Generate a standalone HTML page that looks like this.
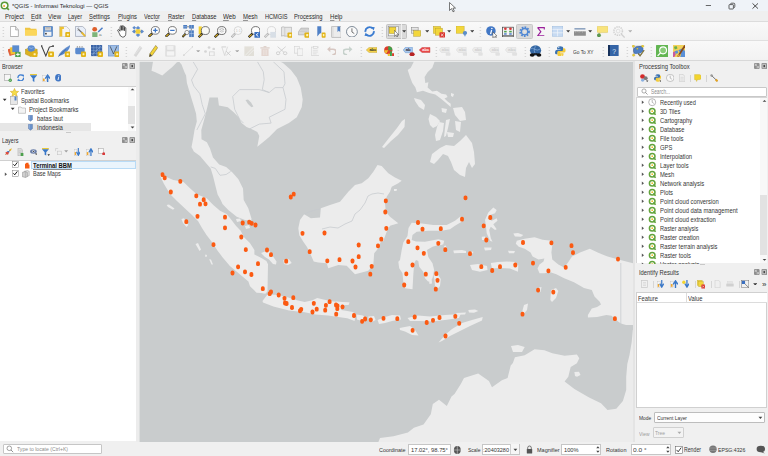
<!DOCTYPE html><html><head><meta charset="utf-8"><style>
html,body{margin:0;padding:0;}
body{width:768px;height:456px;overflow:hidden;position:relative;background:#f0f0f0;font-family:"Liberation Sans",sans-serif;}
.t{position:absolute;white-space:nowrap;line-height:1;}
.r{position:absolute;}
svg{position:absolute;}
</style></head><body>
<div class="r" style="left:0px;top:0px;width:768.00px;height:11.00px;background:#eff3f8;"></div>
<div class="r" style="left:0px;top:11px;width:768.00px;height:10.00px;background:#efefef;"></div>
<div class="r" style="left:0px;top:21px;width:768.00px;height:1.00px;background:#dcdcdc;"></div>
<div class="r" style="left:0px;top:22px;width:768.00px;height:18.00px;background:linear-gradient(#f9f9f9,#f2f2f2);"></div>
<div class="r" style="left:0px;top:40px;width:768.00px;height:1.00px;background:#e0e0e0;"></div>
<div class="r" style="left:0px;top:41px;width:768.00px;height:19.00px;background:linear-gradient(#f9f9f9,#f2f2f2);"></div>
<div class="r" style="left:0px;top:60px;width:768.00px;height:1.00px;background:#d8d8d8;"></div>
<svg style="left:0;top:1" width="10" height="10" viewBox="0 0 10 10"><circle cx="4.6" cy="4.5" r="3.3" fill="#fdfdf8" stroke="#5a9a38" stroke-width="1.5"/><path d="M6.3 6.3 L8.9 8.8" stroke="#5a9a38" stroke-width="1.7"/><circle cx="4.1" cy="4.9" r="1" fill="#f0a030"/></svg>
<div class="t" style="left:11.7px;top:3.04px;font-size:6.1px;color:#2a2a2a;font-weight:400;transform:scaleX(0.962);transform-origin:0 0;">*QGIS - Informasi Teknologi — QGIS</div>
<svg style="left:705;top:4" width="7" height="3"><path d="M0.8 1.5 H6" stroke="#444" stroke-width="0.8"/></svg>
<svg style="left:727;top:2" width="10" height="8"><rect x="2" y="2.6" width="4.4" height="4.4" rx="0.6" fill="none" stroke="#3a3a3a" stroke-width="0.8"/><path d="M3.4 2.2 Q3.6 1.2 4.6 1.2 H6.8 Q7.8 1.2 7.8 2.2 V4.6 Q7.8 5.6 6.8 5.8" fill="none" stroke="#3a3a3a" stroke-width="0.8"/></svg>
<svg style="left:751;top:2" width="9" height="8"><path d="M1.5 1.4 L7 6.6 M7 1.4 L1.5 6.6" stroke="#3a3a3a" stroke-width="0.9"/></svg>
<svg style="left:449;top:2" width="8" height="11"><path d="M0.5 0.5 L0.5 8.5 L2.5 6.6 L4 9.8 L5.3 9.2 L3.9 6.1 L6.5 6.1 Z" fill="#fff" stroke="#222" stroke-width="0.6"/></svg>
<div class="t" style="left:5.2px;top:14.22px;font-size:6.3px;color:#2a2a2a;font-weight:400;transform:scaleX(0.968);transform-origin:0 0;">Pro<u style="text-decoration-thickness:0.5px;text-underline-offset:0.8px;text-decoration-color:rgba(40,40,40,0.45)">j</u>ect</div>
<div class="t" style="left:30.5px;top:14.22px;font-size:6.3px;color:#2a2a2a;font-weight:400;transform:scaleX(0.967);transform-origin:0 0;"><u style="text-decoration-thickness:0.5px;text-underline-offset:0.8px;text-decoration-color:rgba(40,40,40,0.45)">E</u>dit</div>
<div class="t" style="left:48px;top:14.22px;font-size:6.3px;color:#2a2a2a;font-weight:400;transform:scaleX(0.960);transform-origin:0 0;"><u style="text-decoration-thickness:0.5px;text-underline-offset:0.8px;text-decoration-color:rgba(40,40,40,0.45)">V</u>iew</div>
<div class="t" style="left:68px;top:14.22px;font-size:6.3px;color:#2a2a2a;font-weight:400;transform:scaleX(0.888);transform-origin:0 0;"><u style="text-decoration-thickness:0.5px;text-underline-offset:0.8px;text-decoration-color:rgba(40,40,40,0.45)">L</u>ayer</div>
<div class="t" style="left:89px;top:14.22px;font-size:6.3px;color:#2a2a2a;font-weight:400;transform:scaleX(0.922);transform-origin:0 0;"><u style="text-decoration-thickness:0.5px;text-underline-offset:0.8px;text-decoration-color:rgba(40,40,40,0.45)">S</u>ettings</div>
<div class="t" style="left:118px;top:14.22px;font-size:6.3px;color:#2a2a2a;font-weight:400;transform:scaleX(0.920);transform-origin:0 0;"><u style="text-decoration-thickness:0.5px;text-underline-offset:0.8px;text-decoration-color:rgba(40,40,40,0.45)">P</u>lugins</div>
<div class="t" style="left:144px;top:14.22px;font-size:6.3px;color:#2a2a2a;font-weight:400;transform:scaleX(0.894);transform-origin:0 0;">Vect<u style="text-decoration-thickness:0.5px;text-underline-offset:0.8px;text-decoration-color:rgba(40,40,40,0.45)">o</u>r</div>
<div class="t" style="left:168px;top:14.22px;font-size:6.3px;color:#2a2a2a;font-weight:400;transform:scaleX(0.889);transform-origin:0 0;"><u style="text-decoration-thickness:0.5px;text-underline-offset:0.8px;text-decoration-color:rgba(40,40,40,0.45)">R</u>aster</div>
<div class="t" style="left:191.75px;top:14.22px;font-size:6.3px;color:#2a2a2a;font-weight:400;transform:scaleX(0.908);transform-origin:0 0;"><u style="text-decoration-thickness:0.5px;text-underline-offset:0.8px;text-decoration-color:rgba(40,40,40,0.45)">D</u>atabase</div>
<div class="t" style="left:223px;top:14.22px;font-size:6.3px;color:#2a2a2a;font-weight:400;transform:scaleX(0.991);transform-origin:0 0;"><u style="text-decoration-thickness:0.5px;text-underline-offset:0.8px;text-decoration-color:rgba(40,40,40,0.45)">W</u>eb</div>
<div class="t" style="left:243px;top:14.22px;font-size:6.3px;color:#2a2a2a;font-weight:400;transform:scaleX(0.941);transform-origin:0 0;"><u style="text-decoration-thickness:0.5px;text-underline-offset:0.8px;text-decoration-color:rgba(40,40,40,0.45)">M</u>esh</div>
<div class="t" style="left:264.5px;top:14.22px;font-size:6.3px;color:#2a2a2a;font-weight:400;transform:scaleX(0.893);transform-origin:0 0;">HCMGIS</div>
<div class="t" style="left:294px;top:14.22px;font-size:6.3px;color:#2a2a2a;font-weight:400;transform:scaleX(0.914);transform-origin:0 0;">Pro<u style="text-decoration-thickness:0.5px;text-underline-offset:0.8px;text-decoration-color:rgba(40,40,40,0.45)">c</u>essing</div>
<div class="t" style="left:329.5px;top:14.22px;font-size:6.3px;color:#2a2a2a;font-weight:400;transform:scaleX(0.964);transform-origin:0 0;"><u style="text-decoration-thickness:0.5px;text-underline-offset:0.8px;text-decoration-color:rgba(40,40,40,0.45)">H</u>elp</div>
<div class="r" style="left:139px;top:61px;width:494px;height:381px;overflow:hidden;background:#c9cccd">
<svg style="left:0;top:0" width="494" height="381" viewBox="139 61 494 381">
<polygon points="153,60 153,61.5 151.5,70.8 155.4,72.3 162.3,75.4 166.9,71.5 172.3,66.9 176.9,62.3 179.2,61.8 181.5,64.6 184.5,72.3 186.1,75.4 186.9,83 189.2,90.7 191.5,98.4 193.8,106.1 196.1,113.8 196.8,121.4 194.5,130 193,139.2 191.5,146.9 193.8,151.5 200,156.1 205.3,162.3 210.7,168.4 213,176 215.3,185.3 217.6,194.5 220.7,200 222.5,204 228.3,210 236.7,216.7 245,220 250,220.8 251.7,219.2 248.3,208.3 243.7,200 243,188.4 238.4,179.2 232.2,172.2 226.1,166.9 219.2,164.6 213,157.6 210,148.4 206.9,142.3 201.5,139.2 201.3,130 204.5,118.4 207.6,106.1 209.5,97.5 217.9,97.5 218.9,105.4 227.8,107.3 233.7,112.3 238.6,117.2 241.6,123.1 246.5,127.1 251.4,129 257.3,132 259.3,135.9 257.3,146.8 262.3,142.8 269.2,136.9 277.1,129 288.9,123.1 296.8,117.2 301.7,107.3 302.7,99.4 300.7,87.6 296.8,77.8 290.9,69.9 283,63 280,61.5 280,60" fill="#ececec"/>
<polygon points="160,174.2 173.3,180 183.3,181.7 190,188.3 196.7,194.2 206.7,198.3 213.3,205 220,210.8 226.7,214 231.5,220 236.1,226.1 240.7,230.8 243.8,236.9 249.9,243 254.4,250 254.4,254.4 261,257.7 266.4,261 268,264.2 267.7,280 267.5,291.6 265.3,293.8 261,293 256.6,292.7 250,286.2 248.4,281.4 239.2,273.8 229.9,266.1 222.3,256.9 217.6,250.7 211.5,241.5 206.5,235 202,228 198,221 192,215 185,208.5 177.5,201.5 170,194 164,184 160,175.8" fill="#ececec"/>
<polygon points="300,220 304.2,214.2 310.8,218.3 320,217.5 320.8,208.3 330,205 340,201.7 348.3,191.7 355,185 361.7,183.3 368.3,178.3 373.3,171.7 377.5,165 381.7,166 388.3,173.3 395,177.5 401.7,180.8 398.3,183.3 391.7,186.7 390,191.7 386.7,196.7 385,203.3 385.8,211.7 390,216.7 398.3,223.3 390,225.8 386.7,231.7 383.3,241 380.8,241.7 378.3,248.3 374.2,253.3 373.3,265 368.3,270.8 355,274.2 346.7,265.8 338.3,265 328.3,268.3 326.7,263.3 318.3,262.5 313.7,261.4 310.3,253.8 307,247 303.5,242 299.3,235.2 298.3,228.3" fill="#ececec"/>
<polygon points="262.5,301 267.2,294.8 276.6,294.8 287.5,297.2 296.9,300.3 304.7,301.9 312.5,300.3 317.2,298 323.4,299.5 331.25,301.3 338.2,301.9 349.2,302.8 348.3,304.6 342.8,305.5 341,310 347.3,311 352.8,311.9 355.6,313.7 355.1,317.3 354.6,321 347.3,318.3 338.2,317 328,315.5 315.6,314.4 304.7,312.3 289,310.5 273.4,306.6 263,302.5" fill="#ececec"/>
<polygon points="408.5,228 411.7,222.7 422,223.5 433.3,225 446.7,225 455,220.8 460,216.7 463.3,217.5 461.7,221.7 455,225.8 450,229.2 441.7,230.8 428.3,230.8 416.7,231.7 412.5,235 411.7,240 416,241.5 425,241.7 438.3,239.2 444.2,240.8 443.3,244.2 438.3,245 432.5,246.7 427,250 428.3,257 432.5,263.3 434.2,270 432.5,278.3 428.3,281.7 425,278.3 423.3,271.7 419.2,266.7 418.3,261 416,260 414.2,263.3 413.3,275 412.5,289.2 405,288.3 403.3,281.7 402.5,273.3 399.2,268.3 398.3,261.7 400,260 401.7,250 403.3,242.5 407.5,236" fill="#ececec"/>
<polygon points="516.8,240.8 524.7,238.8 534.6,237.2 542.5,239.8 551.4,240.8 552.3,244.7 551.4,252.6 552.3,259.5 558.3,264.4 564.2,267.4 568,262.5 572,256.6 580,252.6 589.8,248.7 597.7,252.6 607.6,256.6 618.4,259.5 634,263.5 634,324.9 626,324.9 620.8,323.6 615.5,319.6 611.6,315.7 606.3,315 597.1,317 587.9,317.6 587.9,315 591.8,308.4 597.1,307.1 601,304.5 599.7,301.8 594.5,296.6 591.8,290 584,288 574,282.2 564.2,278.3 556.3,274.3 550.4,272.3 544.4,273.3 539.5,273.3 537.5,268.4 539.5,264.4 543.5,261.5 544.4,258.5 538.5,259.5 532.6,256.6 530.6,252.6 524.7,248.7 518.8,246.7 515.8,243.7" fill="#ececec"/>
<polygon points="378,443 380,437.9 393.5,436.2 407.9,432.4 413.9,427.7 423.5,424.6 430.8,414.2 432.8,404 439,399.7 444.3,404 446.8,406 451.5,396.6 454.5,393.9 460.8,384.1 464,377.9 478.2,373.5 488.9,381 492,387.2 501.9,380.3 507.6,377.9 510.7,365.4 512.9,363.1 514.9,357.2 524.7,355.2 534.6,349.3 544.4,350.3 552.3,353.3 564.6,355.8 576.9,354.6 579.3,358.3 576.9,363.2 570.7,366.9 569.5,371.8 568.3,376.7 564.6,381.6 574.4,389 589.1,397.6 601,403.3 607.5,410 616.3,408.8 622.9,401 626.2,390 626.2,377 627.3,363.9 629.5,355 631.7,342 632.8,330 634,330 634,443" fill="#ececec"/>
<polygon points="414.6,60 434.6,60 434.6,61.5 432.3,67.7 427.6,72.3 424.6,76.9 425.3,83 428.4,82.3 427.6,87.6 432.3,91.5 436.9,90.7 441.5,93.8 446.1,94.6 447.6,96.9 444.5,98.4 447.6,101.5 450.7,103.8 450.7,106.9 446.1,103 440.7,98.4 435.3,94.6 429.2,93 423,90.7 416.9,92.3 415.4,87.6 412.3,83 410,76.9 407.7,70 410.8,67.7" fill="#ececec"/>
<polygon points="414,98 421,100 425,105 424,110 419,107 415,101" fill="#ececec"/>
<polygon points="405,119 404.5,127 398,135 391,141 384,148 382,147 389,138 397,128 402,121" fill="#ececec"/>
<polygon points="430,114 436,117 440,121 437,126 433,128 430,125 428.5,119" fill="#ececec"/>
<polygon points="439,122 444,123 443,131 440,140 436,141 435,135 437,127" fill="#ececec"/>
<polygon points="446,120 450,119 448,128 446,136 444,137 445,128" fill="#ececec"/>
<polygon points="447,132 454,133 453,137 448,137" fill="#ececec"/>
<polygon points="453,108 462,107 465,112 466,120 460,121 455,115" fill="#ececec"/>
<polygon points="455,121 461,122 460,132 456,130" fill="#ececec"/>
<polygon points="441.5,108 447,109 446,113 442,112" fill="#ececec"/>
<polygon points="430,162 432,154 440,148 446,145 454,146 460,141 466,135 472,143 474,152 475,164 472,168 469,162 466,168 465,177 460,175 454,170 451,162 448,156 443,154 438,160 434,164" fill="#ececec"/>
<polygon points="451,93 454,94 453,97 451,96" fill="#ececec"/>
<polygon points="493.3,207.5 496.7,210 495,213.3 490,215 487.5,218.3 491.7,220.8 496.7,218.3 497.5,220.8 493.3,224.2 496.7,229.2 495,230 490.8,226.7 489.2,230 490.8,238.3 492.5,241.7 490,240.8 486.7,233.3 485.8,225 485,220 488.3,212.5" fill="#ececec"/>
<polygon points="481.7,236.7 485,236.5 485.8,240 482,240" fill="#ececec"/>
<polygon points="484,247.5 491.7,247.5 491,250 485,250.5" fill="#ececec"/>
<polygon points="508,250.8 515,251 514,253.3 509,253.3" fill="#ececec"/>
<polygon points="513.3,233.5 518,233 523.3,235 521,236.7 515,236.5" fill="#ececec"/>
<polygon points="470,265 478,264 487,266 487.5,270 480,271.7 472,270" fill="#ececec"/>
<polygon points="490.8,263 498,262 507,261.5 515,262 518.3,265 518,271.7 510,268.5 500,268 492,268.5" fill="#ececec"/>
<polygon points="453.3,250.5 462,250 466,251 466,253 460,253 454,253.3" fill="#ececec"/>
<polygon points="468,252 473.3,251.5 473,253.3 468,253.5" fill="#ececec"/>
<polygon points="356.5,314.5 363,315.5 365.6,318 362,321 357,319.5" fill="#ececec"/>
<polygon points="368.3,316.5 374,316 375.6,320 372,322 369,321" fill="#ececec"/>
<polygon points="377.6,320 385,317 392,315 400,315.5 401,319.5 392,321 385,323 379,324" fill="#ececec"/>
<polygon points="407.5,318 418,315.5 430,316.5 445,315 460.6,314 459,318 445,320 432,321.6 420,321 410,321" fill="#ececec"/>
<polygon points="399.7,328 410,326 415,330 418.5,335.5 412,335 405,331.5 400,330" fill="#ececec"/>
<polygon points="438.5,342.6 446,334 452,329 462,323 472,320 482.7,317 482,320.5 470,326 460,331 450,336 442,341" fill="#ececec"/>
<polygon points="468.3,310 475,309.4 478.3,311 474,312.7 469,312.5" fill="#ececec"/>
<polygon points="456,313 466,312.5 465,314.5 457,314.8" fill="#ececec"/>
<polygon points="551,290 556,288 558.3,291 556,298 552,302 550.4,300" fill="#ececec"/>
<polygon points="537.5,288 541.5,287 540.5,292 538,291.5" fill="#ececec"/>
<polygon points="524,305 528,303.5 527,310 523,315 521.8,313" fill="#ececec"/>
<polygon points="511,346 518,345 524.7,347 522,352 513,352" fill="#ececec"/>
<polygon points="574.4,372 579,371.8 580.5,375 577,376.7 575,376" fill="#ececec"/>
<polygon points="261,253 265,251.5 269.5,251 272,255 276.5,261.5 276,264.5 273,264 269,259.5 265,257" fill="#ececec"/>
<polygon points="283.3,260 289,259.2 291.7,263 288,265 284,264" fill="#ececec"/>
<polygon points="336,301.5 349.6,302.5 348.5,305 337,305" fill="#ececec"/>
<polygon points="166.6,205 169,204.4 174.5,208.5 173,209.8 168,207" fill="#ececec"/>
<polygon points="181.4,219 184,218.2 188.4,225 186.5,227 183,223" fill="#ececec"/>
<polygon points="195.5,244 198,243 201,249.5 199.5,251" fill="#ececec"/>
<polygon points="205.4,254.6 207,255 206.5,257 205,256.5" fill="#ececec"/>
<polygon points="209.2,259.2 211,259.5 213,264.5 211.5,264.5" fill="#ececec"/>
<polygon points="291,195 294,193 295.5,195 292,198" fill="#ececec"/>
<polygon points="236,219 240,218.5 241,221 237,222" fill="#ececec"/>
<polygon points="245,226 249,225 250,228 246,229" fill="#ececec"/>
<polygon points="394,189 397,189 396.5,191 394,191" fill="#ececec"/>
<polygon points="245.5,100 248,99.4 251,102.5 253.4,106.5 251.5,107.3 248,104" fill="#c9cccd"/>
<polygon points="433.5,274.5 437,273.5 440.8,279 440,286 438,288.5 435,286 434.5,280" fill="#ececec"/>
<polygon points="428.5,277.5 431.5,276.5 432,283.5 429.5,284" fill="#ececec"/>
<polygon points="437.5,242.5 441.5,242 442.5,244.5 439,245.5" fill="#ececec"/>
<polygon points="444,246 446,245.5 446.5,248.5 444.5,249" fill="#ececec"/>
<polyline points="193,61.5 197.6,69.2 191.5,80 193.8,86.1 199.9,93.8 202.2,104.5 205.3,113.8 201.4,121.4 196.8,130" fill="none" stroke="#c6cacd" stroke-width="0.75"/>
<polyline points="257.3,61.5 263.3,71.8 264.2,79.7 262.3,89.6 269.2,92.5 275.1,87.6 283,87.6" fill="none" stroke="#c6cacd" stroke-width="0.75"/>
<polyline points="232.7,96.5 239.6,89.6 259.3,89.6 269.2,92.5" fill="none" stroke="#c6cacd" stroke-width="0.75"/>
<polyline points="283,87.6 286,99.4 285,109.3 269.2,117.2 271.1,123.1 259.3,124.1 249.4,129" fill="none" stroke="#c6cacd" stroke-width="0.75"/>
<polyline points="273.1,61.5 284,71.8 285,83.7 283,87.6" fill="none" stroke="#c6cacd" stroke-width="0.75"/>
<polyline points="232.7,96.5 234.7,109.3 239.6,119.2 243.5,123.1" fill="none" stroke="#c6cacd" stroke-width="0.75"/>
<polyline points="210.7,166.9 215.3,168.4 220,175.3 226.1,174.5 230.7,171.5" fill="none" stroke="#c6cacd" stroke-width="0.75"/>
<polyline points="304,214 309,212 315,210 320,209" fill="none" stroke="#c6cacd" stroke-width="0.75"/>
<polyline points="322,229 330,227 338,228 345,224 352,221 355,214 360,210 365,203 368,196 372,194 378,193 384,194" fill="none" stroke="#c6cacd" stroke-width="0.75"/>
<polyline points="620.8,263 620.8,324" fill="none" stroke="#c6cacd" stroke-width="0.75"/>
<rect x="160.60" y="172.30" width="3.8" height="4.8" rx="1.7" fill="#fb5a12"/>
<rect x="162.80" y="175.40" width="3.8" height="4.8" rx="1.7" fill="#fb5a12"/>
<rect x="178.40" y="178.90" width="3.8" height="4.8" rx="1.7" fill="#fb5a12"/>
<rect x="168.90" y="189.60" width="3.8" height="4.8" rx="1.7" fill="#fb5a12"/>
<rect x="194.40" y="193.40" width="3.8" height="4.8" rx="1.7" fill="#fb5a12"/>
<rect x="201.80" y="197.30" width="3.8" height="4.8" rx="1.7" fill="#fb5a12"/>
<rect x="198.10" y="201.80" width="3.8" height="4.8" rx="1.7" fill="#fb5a12"/>
<rect x="203.60" y="201.40" width="3.8" height="4.8" rx="1.7" fill="#fb5a12"/>
<rect x="195.60" y="213.90" width="3.8" height="4.8" rx="1.7" fill="#fb5a12"/>
<rect x="184.40" y="219.30" width="3.8" height="4.8" rx="1.7" fill="#fb5a12"/>
<rect x="223.10" y="214.80" width="3.8" height="4.8" rx="1.7" fill="#fb5a12"/>
<rect x="223.10" y="225.40" width="3.8" height="4.8" rx="1.7" fill="#fb5a12"/>
<rect x="240.80" y="220.60" width="3.8" height="4.8" rx="1.7" fill="#fb5a12"/>
<rect x="247.30" y="219.80" width="3.8" height="4.8" rx="1.7" fill="#fb5a12"/>
<rect x="249.80" y="220.90" width="3.8" height="4.8" rx="1.7" fill="#fb5a12"/>
<rect x="253.60" y="222.60" width="3.8" height="4.8" rx="1.7" fill="#fb5a12"/>
<rect x="239.40" y="234.60" width="3.8" height="4.8" rx="1.7" fill="#fb5a12"/>
<rect x="291.80" y="191.80" width="3.8" height="4.8" rx="1.7" fill="#fb5a12"/>
<rect x="288.90" y="194.60" width="3.8" height="4.8" rx="1.7" fill="#fb5a12"/>
<rect x="383.90" y="198.40" width="3.8" height="4.8" rx="1.7" fill="#fb5a12"/>
<rect x="383.40" y="209.60" width="3.8" height="4.8" rx="1.7" fill="#fb5a12"/>
<rect x="384.40" y="225.90" width="3.8" height="4.8" rx="1.7" fill="#fb5a12"/>
<rect x="300.60" y="230.90" width="3.8" height="4.8" rx="1.7" fill="#fb5a12"/>
<rect x="322.60" y="230.60" width="3.8" height="4.8" rx="1.7" fill="#fb5a12"/>
<rect x="379.40" y="236.80" width="3.8" height="4.8" rx="1.7" fill="#fb5a12"/>
<rect x="463.60" y="195.40" width="3.8" height="4.8" rx="1.7" fill="#fb5a12"/>
<rect x="460.10" y="216.80" width="3.8" height="4.8" rx="1.7" fill="#fb5a12"/>
<rect x="416.10" y="220.10" width="3.8" height="4.8" rx="1.7" fill="#fb5a12"/>
<rect x="420.60" y="226.80" width="3.8" height="4.8" rx="1.7" fill="#fb5a12"/>
<rect x="438.90" y="226.30" width="3.8" height="4.8" rx="1.7" fill="#fb5a12"/>
<rect x="406.40" y="239.30" width="3.8" height="4.8" rx="1.7" fill="#fb5a12"/>
<rect x="415.60" y="245.40" width="3.8" height="4.8" rx="1.7" fill="#fb5a12"/>
<rect x="421.90" y="250.90" width="3.8" height="4.8" rx="1.7" fill="#fb5a12"/>
<rect x="436.40" y="240.90" width="3.8" height="4.8" rx="1.7" fill="#fb5a12"/>
<rect x="443.40" y="247.30" width="3.8" height="4.8" rx="1.7" fill="#fb5a12"/>
<rect x="468.10" y="251.30" width="3.8" height="4.8" rx="1.7" fill="#fb5a12"/>
<rect x="488.40" y="215.10" width="3.8" height="4.8" rx="1.7" fill="#fb5a12"/>
<rect x="481.80" y="223.40" width="3.8" height="4.8" rx="1.7" fill="#fb5a12"/>
<rect x="484.40" y="237.60" width="3.8" height="4.8" rx="1.7" fill="#fb5a12"/>
<rect x="521.10" y="240.10" width="3.8" height="4.8" rx="1.7" fill="#fb5a12"/>
<rect x="410.60" y="262.60" width="3.8" height="4.8" rx="1.7" fill="#fb5a12"/>
<rect x="404.40" y="271.40" width="3.8" height="4.8" rx="1.7" fill="#fb5a12"/>
<rect x="402.30" y="282.60" width="3.8" height="4.8" rx="1.7" fill="#fb5a12"/>
<rect x="423.90" y="271.80" width="3.8" height="4.8" rx="1.7" fill="#fb5a12"/>
<rect x="434.40" y="271.30" width="3.8" height="4.8" rx="1.7" fill="#fb5a12"/>
<rect x="435.60" y="277.90" width="3.8" height="4.8" rx="1.7" fill="#fb5a12"/>
<rect x="433.90" y="286.80" width="3.8" height="4.8" rx="1.7" fill="#fb5a12"/>
<rect x="479.40" y="264.30" width="3.8" height="4.8" rx="1.7" fill="#fb5a12"/>
<rect x="490.30" y="268.10" width="3.8" height="4.8" rx="1.7" fill="#fb5a12"/>
<rect x="498.10" y="264.30" width="3.8" height="4.8" rx="1.7" fill="#fb5a12"/>
<rect x="513.40" y="262.60" width="3.8" height="4.8" rx="1.7" fill="#fb5a12"/>
<rect x="395.40" y="316.30" width="3.8" height="4.8" rx="1.7" fill="#fb5a12"/>
<rect x="412.80" y="314.60" width="3.8" height="4.8" rx="1.7" fill="#fb5a12"/>
<rect x="424.80" y="320.10" width="3.8" height="4.8" rx="1.7" fill="#fb5a12"/>
<rect x="431.10" y="317.90" width="3.8" height="4.8" rx="1.7" fill="#fb5a12"/>
<rect x="437.60" y="315.10" width="3.8" height="4.8" rx="1.7" fill="#fb5a12"/>
<rect x="453.40" y="313.90" width="3.8" height="4.8" rx="1.7" fill="#fb5a12"/>
<rect x="457.30" y="320.90" width="3.8" height="4.8" rx="1.7" fill="#fb5a12"/>
<rect x="520.60" y="311.80" width="3.8" height="4.8" rx="1.7" fill="#fb5a12"/>
<rect x="265.10" y="247.60" width="3.8" height="4.8" rx="1.7" fill="#fb5a12"/>
<rect x="269.10" y="252.30" width="3.8" height="4.8" rx="1.7" fill="#fb5a12"/>
<rect x="256.10" y="261.30" width="3.8" height="4.8" rx="1.7" fill="#fb5a12"/>
<rect x="284.30" y="258.80" width="3.8" height="4.8" rx="1.7" fill="#fb5a12"/>
<rect x="307.80" y="249.30" width="3.8" height="4.8" rx="1.7" fill="#fb5a12"/>
<rect x="356.80" y="242.60" width="3.8" height="4.8" rx="1.7" fill="#fb5a12"/>
<rect x="376.10" y="243.40" width="3.8" height="4.8" rx="1.7" fill="#fb5a12"/>
<rect x="356.80" y="254.30" width="3.8" height="4.8" rx="1.7" fill="#fb5a12"/>
<rect x="350.60" y="258.60" width="3.8" height="4.8" rx="1.7" fill="#fb5a12"/>
<rect x="325.40" y="258.40" width="3.8" height="4.8" rx="1.7" fill="#fb5a12"/>
<rect x="337.60" y="257.30" width="3.8" height="4.8" rx="1.7" fill="#fb5a12"/>
<rect x="353.60" y="264.60" width="3.8" height="4.8" rx="1.7" fill="#fb5a12"/>
<rect x="369.80" y="263.90" width="3.8" height="4.8" rx="1.7" fill="#fb5a12"/>
<rect x="368.40" y="271.80" width="3.8" height="4.8" rx="1.7" fill="#fb5a12"/>
<rect x="260.90" y="286.30" width="3.8" height="4.8" rx="1.7" fill="#fb5a12"/>
<rect x="267.80" y="291.30" width="3.8" height="4.8" rx="1.7" fill="#fb5a12"/>
<rect x="276.80" y="292.60" width="3.8" height="4.8" rx="1.7" fill="#fb5a12"/>
<rect x="282.60" y="295.90" width="3.8" height="4.8" rx="1.7" fill="#fb5a12"/>
<rect x="291.40" y="295.30" width="3.8" height="4.8" rx="1.7" fill="#fb5a12"/>
<rect x="283.10" y="300.60" width="3.8" height="4.8" rx="1.7" fill="#fb5a12"/>
<rect x="290.10" y="305.10" width="3.8" height="4.8" rx="1.7" fill="#fb5a12"/>
<rect x="298.10" y="308.40" width="3.8" height="4.8" rx="1.7" fill="#fb5a12"/>
<rect x="311.90" y="300.90" width="3.8" height="4.8" rx="1.7" fill="#fb5a12"/>
<rect x="310.60" y="309.60" width="3.8" height="4.8" rx="1.7" fill="#fb5a12"/>
<rect x="314.80" y="306.80" width="3.8" height="4.8" rx="1.7" fill="#fb5a12"/>
<rect x="327.70" y="299.30" width="3.8" height="4.8" rx="1.7" fill="#fb5a12"/>
<rect x="324.00" y="302.90" width="3.8" height="4.8" rx="1.7" fill="#fb5a12"/>
<rect x="323.30" y="307.80" width="3.8" height="4.8" rx="1.7" fill="#fb5a12"/>
<rect x="334.10" y="302.60" width="3.8" height="4.8" rx="1.7" fill="#fb5a12"/>
<rect x="335.40" y="306.30" width="3.8" height="4.8" rx="1.7" fill="#fb5a12"/>
<rect x="340.60" y="304.50" width="3.8" height="4.8" rx="1.7" fill="#fb5a12"/>
<rect x="334.30" y="311.80" width="3.8" height="4.8" rx="1.7" fill="#fb5a12"/>
<rect x="352.10" y="313.10" width="3.8" height="4.8" rx="1.7" fill="#fb5a12"/>
<rect x="360.20" y="319.00" width="3.8" height="4.8" rx="1.7" fill="#fb5a12"/>
<rect x="363.20" y="316.60" width="3.8" height="4.8" rx="1.7" fill="#fb5a12"/>
<rect x="368.90" y="317.50" width="3.8" height="4.8" rx="1.7" fill="#fb5a12"/>
<rect x="381.60" y="316.00" width="3.8" height="4.8" rx="1.7" fill="#fb5a12"/>
<rect x="410.70" y="328.00" width="3.8" height="4.8" rx="1.7" fill="#fb5a12"/>
<rect x="443.60" y="333.60" width="3.8" height="4.8" rx="1.7" fill="#fb5a12"/>
<rect x="549.50" y="240.40" width="3.8" height="4.8" rx="1.7" fill="#fb5a12"/>
<rect x="569.60" y="243.30" width="3.8" height="4.8" rx="1.7" fill="#fb5a12"/>
<rect x="571.10" y="250.20" width="3.8" height="4.8" rx="1.7" fill="#fb5a12"/>
<rect x="616.10" y="256.70" width="3.8" height="4.8" rx="1.7" fill="#fb5a12"/>
<rect x="531.10" y="260.70" width="3.8" height="4.8" rx="1.7" fill="#fb5a12"/>
<rect x="546.50" y="268.40" width="3.8" height="4.8" rx="1.7" fill="#fb5a12"/>
<rect x="563.80" y="265.00" width="3.8" height="4.8" rx="1.7" fill="#fb5a12"/>
<rect x="536.20" y="287.70" width="3.8" height="4.8" rx="1.7" fill="#fb5a12"/>
<rect x="551.40" y="289.70" width="3.8" height="4.8" rx="1.7" fill="#fb5a12"/>
<rect x="613.00" y="316.30" width="3.8" height="4.8" rx="1.7" fill="#fb5a12"/>
<rect x="211.60" y="242.20" width="3.8" height="4.8" rx="1.7" fill="#fb5a12"/>
<rect x="243.90" y="247.20" width="3.8" height="4.8" rx="1.7" fill="#fb5a12"/>
<rect x="236.20" y="264.50" width="3.8" height="4.8" rx="1.7" fill="#fb5a12"/>
<rect x="230.60" y="270.60" width="3.8" height="4.8" rx="1.7" fill="#fb5a12"/>
<rect x="243.10" y="269.50" width="3.8" height="4.8" rx="1.7" fill="#fb5a12"/>
<rect x="249.50" y="272.10" width="3.8" height="4.8" rx="1.7" fill="#fb5a12"/>
<rect x="269.10" y="289.40" width="3.8" height="4.8" rx="1.7" fill="#fb5a12"/>
<rect x="284.70" y="301.10" width="3.8" height="4.8" rx="1.7" fill="#fb5a12"/>
<rect x="299.30" y="306.90" width="3.8" height="4.8" rx="1.7" fill="#fb5a12"/>
<rect x="335.60" y="303.40" width="3.8" height="4.8" rx="1.7" fill="#fb5a12"/>
<rect x="138.5" y="60" width="1.1" height="390" fill="#ececec"/><rect x="130" y="60" width="520" height="1.8" fill="#f0f0f0"/>
</svg></div>
<div class="r" style="left:136px;top:61px;width:3.00px;height:381.00px;background:#ececec;"></div>
<div class="r" style="left:633px;top:61.3px;width:1.50px;height:380.70px;background:#e4e4e4;"></div>
<div class="t" style="left:2.1px;top:63.77px;font-size:6.3px;color:#333;font-weight:400;transform:scaleX(0.901);transform-origin:0 0;">Browser</div>
<svg style="left:122px;top:62.9px" width="13.2" height="6.2" viewBox="0 0 13.2 6.2"><rect x="0" y="0" width="5.6" height="6.1" rx="1.1" fill="#8f8f8f"/><rect x="7.5" y="0" width="5.6" height="6.1" rx="1.1" fill="#8f8f8f"/><path d="M1.2 1.3 H3 M1.2 1.3 V3 M4.4 4.8 H2.6 M4.4 4.8 V3.1 M1.6 1.7 L4 4.4" stroke="#e8e8e8" stroke-width="0.6" fill="none"/><rect x="8.9" y="1.2" width="2.8" height="3.7" fill="none" stroke="#e0e0e0" stroke-width="0.6"/><rect x="9.7" y="2.2" width="1.2" height="1.7" fill="#333"/></svg>
<svg style="left:122px;top:136.8px" width="13.2" height="6.2" viewBox="0 0 13.2 6.2"><rect x="0" y="0" width="5.6" height="6.1" rx="1.1" fill="#8f8f8f"/><rect x="7.5" y="0" width="5.6" height="6.1" rx="1.1" fill="#8f8f8f"/><path d="M1.2 1.3 H3 M1.2 1.3 V3 M4.4 4.8 H2.6 M4.4 4.8 V3.1 M1.6 1.7 L4 4.4" stroke="#e8e8e8" stroke-width="0.6" fill="none"/><rect x="8.9" y="1.2" width="2.8" height="3.7" fill="none" stroke="#e0e0e0" stroke-width="0.6"/><rect x="9.7" y="2.2" width="1.2" height="1.7" fill="#333"/></svg>
<svg style="left:754px;top:63.4px" width="13.2" height="6.2" viewBox="0 0 13.2 6.2"><rect x="0" y="0" width="5.6" height="6.1" rx="1.1" fill="#8f8f8f"/><rect x="7.5" y="0" width="5.6" height="6.1" rx="1.1" fill="#8f8f8f"/><path d="M1.2 1.3 H3 M1.2 1.3 V3 M4.4 4.8 H2.6 M4.4 4.8 V3.1 M1.6 1.7 L4 4.4" stroke="#e8e8e8" stroke-width="0.6" fill="none"/><rect x="8.9" y="1.2" width="2.8" height="3.7" fill="none" stroke="#e0e0e0" stroke-width="0.6"/><rect x="9.7" y="2.2" width="1.2" height="1.7" fill="#333"/></svg>
<div class="r" style="left:0px;top:86px;width:135.50px;height:44.70px;background:#ffffff;border-top:0.6px solid #d0d0d0;box-sizing:border-box"></div>
<div class="r" style="left:128.3px;top:86.6px;width:7.20px;height:44.10px;background:#f9f9f9;"></div>
<div class="r" style="left:128.3px;top:105.6px;width:7.20px;height:18.40px;background:#e2e2e2;"></div>
<svg style="left:128.5;top:87" width="7" height="42"><path d="M1.6 3.3 L3.5 1.5 L5.4 3.3Z" fill="#444"/><path d="M1.6 39.6 L3.5 41.4 L5.4 39.6Z" fill="#444"/></svg>
<div class="r" style="left:0px;top:122.7px;width:91.00px;height:8.30px;background:#e6e6e6;"></div>
<svg style="left:10;top:87.5" width="9" height="9" viewBox="0 0 10 10"><path d="M5 0.5 L6.3 3.6 L9.6 3.8 L7 6 L7.9 9.3 L5 7.5 L2.1 9.3 L3 6 L0.4 3.8 L3.7 3.6Z" fill="#f6de4a" stroke="#d4a820" stroke-width="0.6"/></svg>
<div class="t" style="left:21px;top:89.21px;font-size:6.6px;color:#353535;font-weight:400;transform:scaleX(0.874);transform-origin:0 0;">Favorites</div>
<svg style="left:1.8;top:98" width="6" height="5"><path d="M0.8 0.8 L4.6 0.8 L2.7 3Z" fill="#333"/></svg>
<svg style="left:10;top:96" width="8" height="9"><rect x="0.5" y="0.5" width="7" height="8" fill="#e8e8e8" stroke="#999" stroke-width="0.5"/><rect x="4.5" y="0.5" width="2" height="4" fill="#5a85c4"/></svg>
<div class="t" style="left:20.9px;top:97.81px;font-size:6.6px;color:#353535;font-weight:400;transform:scaleX(0.878);transform-origin:0 0;">Spatial Bookmarks</div>
<svg style="left:10.2;top:107" width="6" height="5"><path d="M0.8 0.8 L4.6 0.8 L2.7 3Z" fill="#333"/></svg>
<svg style="left:18;top:105.5" width="8" height="8"><path d="M0.5 1 H3 L3.8 2 H7.5 V7.3 H0.5Z" fill="#f3f3f3" stroke="#999" stroke-width="0.5"/></svg>
<div class="t" style="left:28.8px;top:106.81px;font-size:6.6px;color:#353535;font-weight:400;transform:scaleX(0.896);transform-origin:0 0;">Project Bookmarks</div>
<svg style="left:27.6;top:115.4" width="5" height="6.4" viewBox="0 0 10 13"><path d="M1 0.5 H9 V9.5 L5 12.6 L1 9.5Z" fill="#6a92cc" stroke="#45689e" stroke-width="0.8"/><path d="M3 1 V9.5" stroke="#9ab8e0" stroke-width="1.2"/></svg>
<div class="t" style="left:37px;top:115.71px;font-size:6.6px;color:#353535;font-weight:400;transform:scaleX(0.906);transform-origin:0 0;">batas laut</div>
<svg style="left:27.6;top:124.4" width="5" height="6.4" viewBox="0 0 10 13"><path d="M1 0.5 H9 V9.5 L5 12.6 L1 9.5Z" fill="#6a92cc" stroke="#45689e" stroke-width="0.8"/><path d="M3 1 V9.5" stroke="#9ab8e0" stroke-width="1.2"/></svg>
<div class="t" style="left:37px;top:124.71px;font-size:6.6px;color:#353535;font-weight:400;transform:scaleX(0.905);transform-origin:0 0;">Indonesia</div>
<div class="r" style="left:66px;top:132.2px;width:5.00px;height:0.60px;background:#c8c8c8;"></div>
<div class="t" style="left:1.9px;top:137.77px;font-size:6.3px;color:#333;font-weight:400;transform:scaleX(0.873);transform-origin:0 0;">Layers</div>
<div class="r" style="left:0px;top:159.5px;width:136.00px;height:281.80px;background:#ffffff;border-top:0.6px solid #d0d0d0;box-sizing:border-box"></div>
<div class="r" style="left:31.4px;top:160.6px;width:104.40px;height:8.40px;background:#eaf4fc;border:0.6px solid #b9dbf6;box-sizing:border-box"></div>
<svg style="left:12.3px;top:161.3px" width="6.6" height="6.6" viewBox="0 0 7 7"><rect x="0.3" y="0.3" width="6.4" height="6.4" fill="#fff" stroke="#7a7a7a" stroke-width="0.5"/><path d="M1.5 3.5 L2.9 5.1 L5.6 1.5" fill="none" stroke="#000" stroke-width="0.95"/></svg>
<svg style="left:23.5;top:161.5" width="6" height="7"><path d="M1 6.5 V2 L2.5 0.8 H4.5 V2.2 L5.5 2.8 V6.5Z" fill="#f65c14"/></svg>
<div class="t" style="left:33.2px;top:162.51px;font-size:6.6px;color:#111;font-weight:700;transform:scaleX(0.887);transform-origin:0 0;text-decoration:underline;text-decoration-color:#8a8a8a;text-decoration-thickness:0.7px;">Terminal BBM</div>
<svg style="left:3.5;top:172" width="4" height="5"><path d="M0.8 0.6 L3 2.3 L0.8 4Z" fill="#555"/></svg>
<svg style="left:12.3px;top:170.3px" width="6.6" height="6.6" viewBox="0 0 7 7"><rect x="0.3" y="0.3" width="6.4" height="6.4" fill="#fff" stroke="#7a7a7a" stroke-width="0.5"/><path d="M1.5 3.5 L2.9 5.1 L5.6 1.5" fill="none" stroke="#000" stroke-width="0.95"/></svg>
<svg style="left:22;top:170" width="7.5" height="8" viewBox="0 0 14 14"><path d="M4 2 L10 0.5 L13.5 2 V10 L10 11.5 L4 10Z" fill="#e2e2e2" stroke="#8a8a8a" stroke-width="0.8"/><path d="M0.5 4 L6.5 2.5 L10 4 V12 L6.5 13.5 L0.5 12Z" fill="#d0d0d0" stroke="#7a7a7a" stroke-width="0.8"/><path d="M6.5 2.5 V13.5" stroke="#8a8a8a" stroke-width="0.6"/></svg>
<div class="t" style="left:33.2px;top:171.01px;font-size:6.6px;color:#353535;font-weight:400;transform:scaleX(0.842);transform-origin:0 0;">Base Maps</div>
<div class="t" style="left:638.7px;top:64.07px;font-size:6.3px;color:#333;font-weight:400;transform:scaleX(0.928);transform-origin:0 0;">Processing Toolbox</div>
<div class="r" style="left:636.8px;top:86.75px;width:130.70px;height:9.85px;background:#ffffff;border:0.6px solid #c8c8c8;box-sizing:border-box;border-radius:1px"></div>
<svg style="left:640.5;top:88.3" width="7" height="7"><circle cx="3" cy="3" r="2.1" fill="none" stroke="#777" stroke-width="0.6"/><path d="M4.5 4.5 L6.5 6.5" stroke="#777" stroke-width="0.7"/></svg>
<div class="t" style="left:650.8px;top:89.37px;font-size:6.3px;color:#8a8a8a;font-weight:400;transform:scaleX(0.754);transform-origin:0 0;">Search...</div>
<div class="r" style="left:636.3px;top:97.3px;width:131.20px;height:166.20px;background:#ffffff;border:0.6px solid #d6d6d6;border-bottom:none;box-sizing:border-box"></div>
<div class="r" style="left:760.3px;top:97.6px;width:7.00px;height:165.90px;background:#f8f8f8;"></div>
<div class="r" style="left:760.3px;top:195.3px;width:7.00px;height:59.70px;background:#e2e2e2;"></div>
<svg style="left:760.5;top:98" width="7" height="165"><path d="M1.6 3.8 L3.5 2 L5.4 3.8Z" fill="#444"/><path d="M1.6 161 L3.5 162.8 L5.4 161Z" fill="#444"/></svg>
<svg style="left:640.5;top:99.90px" width="4" height="5"><path d="M0.8 0.6 L3 2.3 L0.8 4Z" fill="#555"/></svg>
<svg style="left:648;top:98.40px" width="9" height="9"><circle cx="4.2" cy="4.2" r="3.5" fill="#fff" stroke="#888" stroke-width="0.6"/><path d="M4.2 1.8 V4.3 L5.8 5.4" fill="none" stroke="#888" stroke-width="0.6"/></svg>
<div class="t" style="left:659.8px;top:99.61px;font-size:6.6px;color:#353535;font-weight:400;transform:scaleX(0.857);transform-origin:0 0;">Recently used</div>
<svg style="left:640.5;top:108.90px" width="4" height="5"><path d="M0.8 0.6 L3 2.3 L0.8 4Z" fill="#555"/></svg>
<svg style="left:648;top:107.40px" width="9" height="9"><circle cx="4.2" cy="4.2" r="2.8" fill="none" stroke="#62a33c" stroke-width="1.5"/><path d="M5.4 5.4 L7.6 7.8" stroke="#62a33c" stroke-width="1.6"/><circle cx="4.2" cy="4.2" r="0.9" fill="#f0c030"/></svg>
<div class="t" style="left:659.8px;top:108.61px;font-size:6.6px;color:#353535;font-weight:400;transform:scaleX(0.852);transform-origin:0 0;">3D Tiles</div>
<svg style="left:640.5;top:117.90px" width="4" height="5"><path d="M0.8 0.6 L3 2.3 L0.8 4Z" fill="#555"/></svg>
<svg style="left:648;top:116.40px" width="9" height="9"><circle cx="4.2" cy="4.2" r="2.8" fill="none" stroke="#62a33c" stroke-width="1.5"/><path d="M5.4 5.4 L7.6 7.8" stroke="#62a33c" stroke-width="1.6"/><circle cx="4.2" cy="4.2" r="0.9" fill="#f0c030"/></svg>
<div class="t" style="left:659.8px;top:117.61px;font-size:6.6px;color:#353535;font-weight:400;transform:scaleX(0.890);transform-origin:0 0;">Cartography</div>
<svg style="left:640.5;top:126.90px" width="4" height="5"><path d="M0.8 0.6 L3 2.3 L0.8 4Z" fill="#555"/></svg>
<svg style="left:648;top:125.40px" width="9" height="9"><circle cx="4.2" cy="4.2" r="2.8" fill="none" stroke="#62a33c" stroke-width="1.5"/><path d="M5.4 5.4 L7.6 7.8" stroke="#62a33c" stroke-width="1.6"/><circle cx="4.2" cy="4.2" r="0.9" fill="#f0c030"/></svg>
<div class="t" style="left:659.8px;top:126.61px;font-size:6.6px;color:#353535;font-weight:400;transform:scaleX(0.861);transform-origin:0 0;">Database</div>
<svg style="left:640.5;top:135.90px" width="4" height="5"><path d="M0.8 0.6 L3 2.3 L0.8 4Z" fill="#555"/></svg>
<svg style="left:648;top:134.40px" width="9" height="9"><circle cx="4.2" cy="4.2" r="2.8" fill="none" stroke="#62a33c" stroke-width="1.5"/><path d="M5.4 5.4 L7.6 7.8" stroke="#62a33c" stroke-width="1.6"/><circle cx="4.2" cy="4.2" r="0.9" fill="#f0c030"/></svg>
<div class="t" style="left:659.8px;top:135.61px;font-size:6.6px;color:#353535;font-weight:400;transform:scaleX(0.885);transform-origin:0 0;">File tools</div>
<svg style="left:640.5;top:144.90px" width="4" height="5"><path d="M0.8 0.6 L3 2.3 L0.8 4Z" fill="#555"/></svg>
<svg style="left:648;top:143.40px" width="9" height="9"><circle cx="4.2" cy="4.2" r="2.8" fill="none" stroke="#62a33c" stroke-width="1.5"/><path d="M5.4 5.4 L7.6 7.8" stroke="#62a33c" stroke-width="1.6"/><circle cx="4.2" cy="4.2" r="0.9" fill="#f0c030"/></svg>
<div class="t" style="left:659.8px;top:144.61px;font-size:6.6px;color:#353535;font-weight:400;transform:scaleX(0.885);transform-origin:0 0;">GPS</div>
<svg style="left:640.5;top:153.90px" width="4" height="5"><path d="M0.8 0.6 L3 2.3 L0.8 4Z" fill="#555"/></svg>
<svg style="left:648;top:152.40px" width="9" height="9"><circle cx="4.2" cy="4.2" r="2.8" fill="none" stroke="#62a33c" stroke-width="1.5"/><path d="M5.4 5.4 L7.6 7.8" stroke="#62a33c" stroke-width="1.6"/><circle cx="4.2" cy="4.2" r="0.9" fill="#f0c030"/></svg>
<div class="t" style="left:659.8px;top:153.61px;font-size:6.6px;color:#353535;font-weight:400;transform:scaleX(0.885);transform-origin:0 0;">Interpolation</div>
<svg style="left:640.5;top:162.90px" width="4" height="5"><path d="M0.8 0.6 L3 2.3 L0.8 4Z" fill="#555"/></svg>
<svg style="left:648;top:161.40px" width="9" height="9"><circle cx="4.2" cy="4.2" r="2.8" fill="none" stroke="#62a33c" stroke-width="1.5"/><path d="M5.4 5.4 L7.6 7.8" stroke="#62a33c" stroke-width="1.6"/><circle cx="4.2" cy="4.2" r="0.9" fill="#f0c030"/></svg>
<div class="t" style="left:659.8px;top:162.61px;font-size:6.6px;color:#353535;font-weight:400;transform:scaleX(0.885);transform-origin:0 0;">Layer tools</div>
<svg style="left:640.5;top:171.90px" width="4" height="5"><path d="M0.8 0.6 L3 2.3 L0.8 4Z" fill="#555"/></svg>
<svg style="left:648;top:170.40px" width="9" height="9"><circle cx="4.2" cy="4.2" r="2.8" fill="none" stroke="#62a33c" stroke-width="1.5"/><path d="M5.4 5.4 L7.6 7.8" stroke="#62a33c" stroke-width="1.6"/><circle cx="4.2" cy="4.2" r="0.9" fill="#f0c030"/></svg>
<div class="t" style="left:659.8px;top:171.61px;font-size:6.6px;color:#353535;font-weight:400;transform:scaleX(0.885);transform-origin:0 0;">Mesh</div>
<svg style="left:640.5;top:180.90px" width="4" height="5"><path d="M0.8 0.6 L3 2.3 L0.8 4Z" fill="#555"/></svg>
<svg style="left:648;top:179.40px" width="9" height="9"><circle cx="4.2" cy="4.2" r="2.8" fill="none" stroke="#62a33c" stroke-width="1.5"/><path d="M5.4 5.4 L7.6 7.8" stroke="#62a33c" stroke-width="1.6"/><circle cx="4.2" cy="4.2" r="0.9" fill="#f0c030"/></svg>
<div class="t" style="left:659.8px;top:180.61px;font-size:6.6px;color:#353535;font-weight:400;transform:scaleX(0.885);transform-origin:0 0;">Network analysis</div>
<svg style="left:640.5;top:189.90px" width="4" height="5"><path d="M0.8 0.6 L3 2.3 L0.8 4Z" fill="#555"/></svg>
<svg style="left:648;top:188.40px" width="9" height="9"><circle cx="4.2" cy="4.2" r="2.8" fill="none" stroke="#62a33c" stroke-width="1.5"/><path d="M5.4 5.4 L7.6 7.8" stroke="#62a33c" stroke-width="1.6"/><circle cx="4.2" cy="4.2" r="0.9" fill="#f0c030"/></svg>
<div class="t" style="left:659.8px;top:189.61px;font-size:6.6px;color:#353535;font-weight:400;transform:scaleX(0.885);transform-origin:0 0;">Plots</div>
<svg style="left:640.5;top:198.90px" width="4" height="5"><path d="M0.8 0.6 L3 2.3 L0.8 4Z" fill="#555"/></svg>
<svg style="left:648;top:197.40px" width="9" height="9"><circle cx="4.2" cy="4.2" r="2.8" fill="none" stroke="#62a33c" stroke-width="1.5"/><path d="M5.4 5.4 L7.6 7.8" stroke="#62a33c" stroke-width="1.6"/><circle cx="4.2" cy="4.2" r="0.9" fill="#f0c030"/></svg>
<div class="t" style="left:659.8px;top:198.61px;font-size:6.6px;color:#353535;font-weight:400;transform:scaleX(0.885);transform-origin:0 0;">Point cloud conversion</div>
<svg style="left:640.5;top:207.90px" width="4" height="5"><path d="M0.8 0.6 L3 2.3 L0.8 4Z" fill="#555"/></svg>
<svg style="left:648;top:206.40px" width="9" height="9"><circle cx="4.2" cy="4.2" r="2.8" fill="none" stroke="#62a33c" stroke-width="1.5"/><path d="M5.4 5.4 L7.6 7.8" stroke="#62a33c" stroke-width="1.6"/><circle cx="4.2" cy="4.2" r="0.9" fill="#f0c030"/></svg>
<div class="t" style="left:659.8px;top:207.61px;font-size:6.6px;color:#353535;font-weight:400;transform:scaleX(0.885);transform-origin:0 0;">Point cloud data management</div>
<svg style="left:640.5;top:216.90px" width="4" height="5"><path d="M0.8 0.6 L3 2.3 L0.8 4Z" fill="#555"/></svg>
<svg style="left:648;top:215.40px" width="9" height="9"><circle cx="4.2" cy="4.2" r="2.8" fill="none" stroke="#62a33c" stroke-width="1.5"/><path d="M5.4 5.4 L7.6 7.8" stroke="#62a33c" stroke-width="1.6"/><circle cx="4.2" cy="4.2" r="0.9" fill="#f0c030"/></svg>
<div class="t" style="left:659.8px;top:216.61px;font-size:6.6px;color:#353535;font-weight:400;transform:scaleX(0.885);transform-origin:0 0;">Point cloud extraction</div>
<svg style="left:640.5;top:225.90px" width="4" height="5"><path d="M0.8 0.6 L3 2.3 L0.8 4Z" fill="#555"/></svg>
<svg style="left:648;top:224.40px" width="9" height="9"><circle cx="4.2" cy="4.2" r="2.8" fill="none" stroke="#62a33c" stroke-width="1.5"/><path d="M5.4 5.4 L7.6 7.8" stroke="#62a33c" stroke-width="1.6"/><circle cx="4.2" cy="4.2" r="0.9" fill="#f0c030"/></svg>
<div class="t" style="left:659.8px;top:225.61px;font-size:6.6px;color:#353535;font-weight:400;transform:scaleX(0.850);transform-origin:0 0;">Raster analysis</div>
<svg style="left:640.5;top:234.90px" width="4" height="5"><path d="M0.8 0.6 L3 2.3 L0.8 4Z" fill="#555"/></svg>
<svg style="left:648;top:233.40px" width="9" height="9"><circle cx="4.2" cy="4.2" r="2.8" fill="none" stroke="#62a33c" stroke-width="1.5"/><path d="M5.4 5.4 L7.6 7.8" stroke="#62a33c" stroke-width="1.6"/><circle cx="4.2" cy="4.2" r="0.9" fill="#f0c030"/></svg>
<div class="t" style="left:659.8px;top:234.61px;font-size:6.6px;color:#353535;font-weight:400;transform:scaleX(0.877);transform-origin:0 0;">Raster creation</div>
<svg style="left:640.5;top:243.90px" width="4" height="5"><path d="M0.8 0.6 L3 2.3 L0.8 4Z" fill="#555"/></svg>
<svg style="left:648;top:242.40px" width="9" height="9"><circle cx="4.2" cy="4.2" r="2.8" fill="none" stroke="#62a33c" stroke-width="1.5"/><path d="M5.4 5.4 L7.6 7.8" stroke="#62a33c" stroke-width="1.6"/><circle cx="4.2" cy="4.2" r="0.9" fill="#f0c030"/></svg>
<div class="t" style="left:659.8px;top:243.61px;font-size:6.6px;color:#353535;font-weight:400;transform:scaleX(0.876);transform-origin:0 0;">Raster terrain analysis</div>
<svg style="left:640.5;top:252.90px" width="4" height="5"><path d="M0.8 0.6 L3 2.3 L0.8 4Z" fill="#555"/></svg>
<svg style="left:648;top:251.40px" width="9" height="9"><circle cx="4.2" cy="4.2" r="2.8" fill="none" stroke="#62a33c" stroke-width="1.5"/><path d="M5.4 5.4 L7.6 7.8" stroke="#62a33c" stroke-width="1.6"/><circle cx="4.2" cy="4.2" r="0.9" fill="#f0c030"/></svg>
<div class="t" style="left:659.8px;top:252.61px;font-size:6.6px;color:#353535;font-weight:400;transform:scaleX(0.878);transform-origin:0 0;">Raster tools</div>
<svg style="left:640.5;top:261.90px" width="4" height="5"><path d="M0.8 0.6 L3 2.3 L0.8 4Z" fill="#555"/></svg>
<svg style="left:648;top:260.40px" width="9" height="9"><circle cx="4.2" cy="4.2" r="2.8" fill="none" stroke="#62a33c" stroke-width="1.5"/><path d="M5.4 5.4 L7.6 7.8" stroke="#62a33c" stroke-width="1.6"/><circle cx="4.2" cy="4.2" r="0.9" fill="#f0c030"/></svg>
<div class="t" style="left:659.8px;top:261.61px;font-size:6.6px;color:#353535;font-weight:400;transform:scaleX(0.885);transform-origin:0 0;">Vector analysis</div>
<div class="r" style="left:634.5px;top:263.5px;width:133.50px;height:178.50px;background:#f0f0f0;"></div>
<div class="r" style="left:700px;top:264.2px;width:5.00px;height:0.60px;background:#c8c8c8;"></div>
<svg style="left:754px;top:269.4px" width="13.2" height="6.2" viewBox="0 0 13.2 6.2"><rect x="0" y="0" width="5.6" height="6.1" rx="1.1" fill="#8f8f8f"/><rect x="7.5" y="0" width="5.6" height="6.1" rx="1.1" fill="#8f8f8f"/><path d="M1.2 1.3 H3 M1.2 1.3 V3 M4.4 4.8 H2.6 M4.4 4.8 V3.1 M1.6 1.7 L4 4.4" stroke="#e8e8e8" stroke-width="0.6" fill="none"/><rect x="8.9" y="1.2" width="2.8" height="3.7" fill="none" stroke="#e0e0e0" stroke-width="0.6"/><rect x="9.7" y="2.2" width="1.2" height="1.7" fill="#333"/></svg>
<div class="t" style="left:638.6px;top:270.07px;font-size:6.3px;color:#333;font-weight:400;transform:scaleX(0.927);transform-origin:0 0;">Identify Results</div>
<div class="r" style="left:636.3px;top:292.4px;width:131.20px;height:115.80px;background:#ffffff;border:0.6px solid #d0d0d0;box-sizing:border-box"></div>
<div class="r" style="left:636.9px;top:293px;width:130.10px;height:10.20px;background:#ffffff;border-bottom:0.6px solid #dcdcdc;box-sizing:border-box"></div>
<div class="r" style="left:686.4px;top:293px;width:0.60px;height:10.00px;background:#dcdcdc;"></div>
<div class="t" style="left:638px;top:295.77px;font-size:6.3px;color:#353535;font-weight:400;transform:scaleX(0.917);transform-origin:0 0;">Feature</div>
<div class="t" style="left:687.5px;top:295.77px;font-size:6.3px;color:#353535;font-weight:400;transform:scaleX(0.927);transform-origin:0 0;">Value</div>
<div class="t" style="left:639px;top:415.34px;font-size:6.1px;color:#353535;font-weight:400;transform:scaleX(0.800);transform-origin:0 0;">Mode</div>
<div class="r" style="left:654.3px;top:411.5px;width:110.80px;height:11.40px;background:#fdfdfd;border:0.6px solid #bdbdbd;box-sizing:border-box;border-radius:1px"></div>
<div class="t" style="left:656.6px;top:415.91px;font-size:5.9px;color:#353535;font-weight:400;transform:scaleX(0.833);transform-origin:0 0;">Current Layer</div>
<svg style="left:757.5;top:415.5" width="5" height="4"><path d="M0.5 0.8 H4.3 L2.4 3Z" fill="#444"/></svg>
<div class="t" style="left:639px;top:430.54px;font-size:6.1px;color:#9a9a9a;font-weight:400;transform:scaleX(0.793);transform-origin:0 0;">View</div>
<div class="r" style="left:652.5px;top:427.3px;width:31.80px;height:10.30px;background:#f3f3f3;border:0.6px solid #d0d0d0;box-sizing:border-box;border-radius:1px"></div>
<div class="t" style="left:655px;top:430.44px;font-size:6.1px;color:#a0a0a0;font-weight:400;transform:scaleX(0.812);transform-origin:0 0;">Tree</div>
<svg style="left:677;top:431" width="5" height="4"><path d="M0.5 0.8 H4.3 L2.4 3Z" fill="#aaa"/></svg>
<div class="r" style="left:2.5px;top:443.9px;width:99.20px;height:10.40px;background:#ffffff;border:0.6px solid #c6c6c6;box-sizing:border-box;border-radius:1px"></div>
<svg style="left:6;top:445.3" width="8" height="8"><circle cx="3.3" cy="3.3" r="2.3" fill="none" stroke="#666" stroke-width="0.6"/><path d="M5 5 L7.2 7.2" stroke="#666" stroke-width="0.7"/></svg>
<div class="t" style="left:16.7px;top:447.21px;font-size:5.9px;color:#8c8c8c;font-weight:400;transform:scaleX(0.868);transform-origin:0 0;">Type to locate (Ctrl+K)</div>
<div class="t" style="left:379.4px;top:446.94px;font-size:6.1px;color:#353535;font-weight:400;transform:scaleX(0.886);transform-origin:0 0;">Coordinate</div>
<div class="r" style="left:407.5px;top:443.8px;width:43.30px;height:10.90px;background:#ffffff;border:0.6px solid #c6c6c6;box-sizing:border-box"></div>
<div class="t" style="left:410.6px;top:447.04px;font-size:6.1px;color:#353535;font-weight:400;transform:scaleX(0.952);transform-origin:0 0;">17.02°, 98.75°</div>
<svg style="left:453;top:444.5" width="9" height="10"><ellipse cx="4.3" cy="5" rx="3.4" ry="4" fill="#555"/><path d="M1 5 H7.6 M4.3 1 V9" stroke="#ccc" stroke-width="0.6"/></svg>
<div class="t" style="left:467.5px;top:446.94px;font-size:6.1px;color:#353535;font-weight:400;transform:scaleX(0.820);transform-origin:0 0;">Scale</div>
<div class="r" style="left:481.5px;top:443.8px;width:38.50px;height:10.90px;background:#ffffff;border:0.6px solid #c6c6c6;box-sizing:border-box"></div>
<div class="r" style="left:510px;top:444.4px;width:9.40px;height:9.70px;background:#f6f6f6;border-left:0.6px solid #d0d0d0;box-sizing:border-box"></div>
<div class="t" style="left:482.5px;top:447.04px;font-size:6.1px;color:#353535;font-weight:400;transform:scaleX(0.902);transform-origin:0 0;">:20403280</div>
<svg style="left:512.5;top:447.5" width="5" height="4"><path d="M0.5 0.8 H4.3 L2.4 3Z" fill="#444"/></svg>
<svg style="left:526;top:445" width="7" height="9"><path d="M1.7 4 V2.8 A1.8 1.8 0 0 1 5.3 2.8 V4" fill="none" stroke="#555" stroke-width="0.8"/><rect x="0.8" y="4" width="5.4" height="4.5" rx="0.5" fill="#555"/></svg>
<div class="t" style="left:537px;top:446.94px;font-size:6.1px;color:#353535;font-weight:400;transform:scaleX(0.902);transform-origin:0 0;">Magnifier</div>
<div class="r" style="left:561.25px;top:443.8px;width:40.00px;height:10.90px;background:#ffffff;border:0.6px solid #c6c6c6;box-sizing:border-box"></div>
<div class="t" style="left:563.75px;top:447.04px;font-size:6.1px;color:#353535;font-weight:400;transform:scaleX(0.930);transform-origin:0 0;">100%</div>
<svg style="left:594.5;top:444.8" width="6" height="9"><path d="M1.2 3.2 L2.9 1.3 L4.6 3.2Z M1.2 5.8 L2.9 7.7 L4.6 5.8Z" fill="#444"/></svg>
<div class="t" style="left:605.8px;top:446.94px;font-size:6.1px;color:#353535;font-weight:400;transform:scaleX(0.901);transform-origin:0 0;">Rotation</div>
<div class="r" style="left:631px;top:443.8px;width:40.00px;height:10.90px;background:#ffffff;border:0.6px solid #c6c6c6;box-sizing:border-box"></div>
<div class="t" style="left:632.5px;top:447.04px;font-size:6.1px;color:#353535;font-weight:400;transform:scaleX(1.071);transform-origin:0 0;">0.0 °</div>
<svg style="left:664.5;top:444.8" width="6" height="9"><path d="M1.2 3.2 L2.9 1.3 L4.6 3.2Z M1.2 5.8 L2.9 7.7 L4.6 5.8Z" fill="#444"/></svg>
<svg style="left:674.6;top:445.6" width="8" height="8"><rect x="0.3" y="0.3" width="7" height="7" fill="#fff" stroke="#555" stroke-width="0.5"/><path d="M1.6 3.9 L3.2 5.8 L6.2 1.6" fill="none" stroke="#111" stroke-width="0.8"/></svg>
<div class="t" style="left:684px;top:446.97px;font-size:6.3px;color:#353535;font-weight:400;transform:scaleX(0.823);transform-origin:0 0;">Render</div>
<svg style="left:709;top:445" width="9" height="9"><circle cx="4" cy="4.3" r="3.7" fill="#777"/><path d="M0.6 3 H7.4 M0.6 5.5 H7.4" stroke="#aaa" stroke-width="0.5"/></svg>
<div class="t" style="left:717.7px;top:447.14px;font-size:6.1px;color:#353535;font-weight:400;transform:scaleX(0.848);transform-origin:0 0;">EPSG:4326</div>
<svg style="left:755.5;top:445" width="10" height="9"><ellipse cx="4.8" cy="4" rx="4.2" ry="3.3" fill="#555"/><path d="M6.5 6.5 L8.8 8.6 L5 7Z" fill="#555"/></svg>
<div class="r" style="left:385.6px;top:23.9px;width:21.9px;height:15px;background:#dadada;border:0.6px solid #c2c2c2;box-sizing:border-box;border-radius:1.5px"></div>
<div class="r" style="left:401px;top:24.2px;width:0.7px;height:14.4px;background:#f0f0f0"></div>
<div class="r" style="left:516.25px;top:23.9px;width:16.25px;height:15px;background:#dadada;border:0.6px solid #c8c8c8;box-sizing:border-box;border-radius:1.5px"></div>
<svg style="left:10px;top:26px" width="8.75" height="11.00" viewBox="0 0 14 14" preserveAspectRatio="none"><path d="M0.6 0.6 H9 L13.4 5 V13.4 H0.6Z" fill="#fff" stroke="#8c8c8c" stroke-width="0.9"/><path d="M9 0.6 V5 H13.4" fill="#e4e4e4" stroke="#8c8c8c" stroke-width="0.8"/></svg>
<svg style="left:25px;top:27px" width="12.00" height="8.75" viewBox="0 0 14 14" preserveAspectRatio="none"><path d="M0 1 H5.5 L7 2.6 H13.3 V13.5 H0Z" fill="#eec545"/><path d="M0 4.5 H14 V13.5 H0Z" fill="#fbd65a"/></svg>
<svg style="left:42.5px;top:26px" width="10.00" height="10.75" viewBox="0 0 14 14" preserveAspectRatio="none"><rect x="0.4" y="0.4" width="13.2" height="13.2" rx="1.3" fill="#5a8ccc" stroke="#4070b0" stroke-width="0.6"/><rect x="2.8" y="1.2" width="8.4" height="4.6" fill="#cfcfcf"/><rect x="3.6" y="2" width="6.8" height="0.9" fill="#9a9a9a"/><rect x="2.2" y="7.4" width="9.6" height="5.4" fill="#f3f3f3"/><rect x="3" y="9" width="2.2" height="2" fill="#333"/></svg>
<svg style="left:58.5px;top:26.2px" width="11.50" height="11.20" viewBox="0 0 14 14" preserveAspectRatio="none"><path d="M0.5 0.5 H9 L13 4.5 V13.5 H0.5Z" fill="#f4f4f4" stroke="#a0a0a0" stroke-width="0.6"/><path d="M0.8 0.8 H6 V3.8 H4 V13.2 H0.8Z" fill="#edc232"/><rect x="7.6" y="7.6" width="6.4" height="6.4" rx="1.2" fill="#e2b418"/><rect x="9.6" y="9.6" width="2.4" height="2.4" rx="0.5" fill="#fff4b8"/></svg>
<svg style="left:74.75px;top:26.2px" width="11.25" height="10.90" viewBox="0 0 14 14" preserveAspectRatio="none"><path d="M0.6 0.6 H9.5 L13.4 4.5 V13.4 H0.6Z" fill="#e8eef8" stroke="#9098a8" stroke-width="0.8"/><path d="M4 4 L10 10" stroke="#707070" stroke-width="1.6"/><path d="M2.8 3.6 L4.8 2.4 M3.2 5.6 L5.2 4.2" stroke="#8a8a8a" stroke-width="1"/><path d="M8.2 8.2 L12.6 13" stroke="#e6b830" stroke-width="2.4"/></svg>
<svg style="left:92px;top:26.6px" width="10.80" height="10.20" viewBox="0 0 14 14" preserveAspectRatio="none"><circle cx="3.5" cy="3.2" r="3.1" fill="#de5f2b"/><path d="M8 6.8 L13.6 1" stroke="#4a7cc6" stroke-width="1.8"/><rect x="0.3" y="7.2" width="6.8" height="6.8" fill="#7db47a"/><text x="9" y="13" font-size="6" font-family="Liberation Sans" fill="#6f6f6f">a</text></svg>
<svg style="left:117px;top:25.1px" width="10.50" height="12.50" viewBox="0 0 14 14" preserveAspectRatio="none"><path d="M2.5 8.5 L0.8 5.8 Q1.5 4.6 2.8 5.4 L4 7 V1.8 Q4.8 0.6 5.8 1.6 V6 V1 Q6.8 0 7.8 1 V6 V1.6 Q8.8 0.8 9.8 1.6 V6.5 V3.2 Q10.8 2.4 11.8 3.2 V8.8 Q11.8 13.6 7.6 13.6 Q4.2 13.6 2.5 8.5Z" fill="#fff" stroke="#1a1a1a" stroke-width="0.8"/></svg>
<svg style="left:132px;top:26px" width="12.00" height="11.00" viewBox="0 0 14 14" preserveAspectRatio="none"><g fill="#5f8bcb"><path d="M7 0 L9.6 2.6 L7 5.2 L4.4 2.6Z"/><path d="M7 8.8 L9.6 11.4 L7 14 L4.4 11.4Z"/><path d="M2.6 4.4 L5.2 7 L2.6 9.6 L0 7Z"/><path d="M11.4 4.4 L14 7 L11.4 9.6 L8.8 7Z"/><path d="M2.6 0 L4.8 2.2 L2.6 4.4 L0.4 2.2Z"/></g><rect x="4.2" y="4.2" width="5.6" height="5.6" fill="#f2d03a"/></svg>
<svg style="left:148px;top:25.8px" width="12.00" height="11.40" viewBox="0 0 14 14" preserveAspectRatio="none"><path d="M0.8 13.2 L5 9" stroke="#222" stroke-width="2.8"/><path d="M1.4 12.6 L4.2 9.8" stroke="#e6b820" stroke-width="1.3"/><circle cx="8.6" cy="5.4" r="4.7" fill="#ffffff" stroke="#505050" stroke-width="0.9"/><path d="M8.6 2.8 V8 M6 5.4 H11.2" stroke="#3d76c6" stroke-width="1.5"/></svg>
<svg style="left:164.5px;top:25.8px" width="12.00" height="11.40" viewBox="0 0 14 14" preserveAspectRatio="none"><path d="M0.8 13.2 L5 9" stroke="#222" stroke-width="2.8"/><path d="M1.4 12.6 L4.2 9.8" stroke="#e6b820" stroke-width="1.3"/><circle cx="8.6" cy="5.4" r="4.7" fill="#ffffff" stroke="#505050" stroke-width="0.9"/><path d="M6 5.4 H11.2" stroke="#3d76c6" stroke-width="1.5"/></svg>
<svg style="left:181.9px;top:25.1px" width="11.85" height="12.50" viewBox="0 0 14 14" preserveAspectRatio="none"><g fill="#4c7cc0"><rect x="1.5" y="0" width="4.5" height="4"/><rect x="8.5" y="0" width="5.5" height="4"/><rect x="8.5" y="6" width="5.5" height="7.5"/></g><path d="M1.5 2 H6 M11 0 V4 M8.5 9.5 H14 M11 6 V13.5" stroke="#cfe0f6" stroke-width="0.5"/><path d="M6 2 H8.5 M11 4 V6" stroke="#222" stroke-width="0.6"/><path d="M0.5 13.5 L4.5 9.5" stroke="#222" stroke-width="2.4"/><path d="M1 13 L3.8 10.2" stroke="#e6b820" stroke-width="1.1"/><circle cx="5.8" cy="8.4" r="2.4" fill="#f6f6f6" stroke="#444" stroke-width="0.6"/></svg>
<svg style="left:198px;top:25.75px" width="12.00" height="11.85" viewBox="0 0 14 14" preserveAspectRatio="none"><rect x="0.8" y="0.5" width="3.6" height="9" fill="#f2d030"/><path d="M0.8 13.2 L5 9" stroke="#222" stroke-width="2.8"/><path d="M1.4 12.6 L4.2 9.8" stroke="#e6b820" stroke-width="1.3"/><circle cx="8.6" cy="5.4" r="4.7" fill="rgba(250,250,245,0.9)" stroke="#505050" stroke-width="0.9"/></svg>
<svg style="left:214.4px;top:25.75px" width="12.60" height="11.85" viewBox="0 0 14 14" preserveAspectRatio="none"><path d="M0.8 13.2 L5 9" stroke="#222" stroke-width="2.8"/><path d="M1.4 12.6 L4.2 9.8" stroke="#e6b820" stroke-width="1.3"/><circle cx="8.6" cy="5.4" r="4.7" fill="#f8f8f8" stroke="#505050" stroke-width="0.9"/><path d="M6.2 4 L8.6 2.8 L11 4 L8.6 5.2Z M6.2 6 L8.6 7.2 L11 6" fill="none" stroke="#9a9a9a" stroke-width="0.6"/></svg>
<svg style="left:231px;top:25.75px" width="11.50" height="11.85" viewBox="0 0 14 14" preserveAspectRatio="none"><g opacity="0.32"><path d="M0.8 13.2 L5 9" stroke="#222" stroke-width="2.8"/><path d="M1.4 12.6 L4.2 9.8" stroke="#bbb" stroke-width="1.3"/><circle cx="8.6" cy="5.4" r="4.7" fill="#fff" stroke="#777" stroke-width="0.9"/><text x="5.8" y="7.2" font-size="4.5" font-family="Liberation Sans" fill="#555">1:1</text></g></svg>
<svg style="left:247.5px;top:25.75px" width="12.50" height="11.85" viewBox="0 0 14 14" preserveAspectRatio="none"><path d="M0.8 13.2 L5 9" stroke="#222" stroke-width="2.8"/><path d="M1.4 12.6 L4.2 9.8" stroke="#e6b820" stroke-width="1.3"/><circle cx="8.6" cy="5.4" r="4.7" fill="#fff" stroke="#505050" stroke-width="0.9"/><rect x="7.2" y="7" width="6.8" height="6.8" rx="0.6" fill="#3a70c2"/><path d="M11.6 8.4 L9.2 10.4 L11.6 12.4" fill="none" stroke="#fff" stroke-width="1.1"/></svg>
<svg style="left:263.75px;top:25.75px" width="12.25" height="11.85" viewBox="0 0 14 14" preserveAspectRatio="none"><g opacity="0.3"><path d="M0.8 13.2 L5 9" stroke="#222" stroke-width="2.8"/><path d="M1.4 12.6 L4.2 9.8" stroke="#bbb" stroke-width="1.3"/><circle cx="8.6" cy="5.4" r="4.7" fill="#fff" stroke="#777" stroke-width="0.9"/><rect x="7.2" y="7" width="6.8" height="6.8" fill="#9ab0c8"/></g></svg>
<svg style="left:280.6px;top:25.75px" width="11.90" height="11.85" viewBox="0 0 14 14" preserveAspectRatio="none"><path d="M0.5 1.5 Q2.5 0.3 4.5 1.5 H12.5 V12 H4.5 Q2.5 10.8 0.5 12Z" fill="#e6e6e6" stroke="#9c9c9c" stroke-width="0.6"/><path d="M4.5 1.5 V12" stroke="#b8b8b8" stroke-width="0.6"/><rect x="7.6" y="7.6" width="6.4" height="6.4" rx="1.2" fill="#e2b418"/><rect x="9.6" y="9.6" width="2.4" height="2.4" rx="0.5" fill="#fff4b8"/></svg>
<svg style="left:297.5px;top:25.75px" width="11.90" height="11.85" viewBox="0 0 14 14" preserveAspectRatio="none"><path d="M0.5 7 L3.5 2.5 H12.5 L13.5 6 L9.5 10.5 H0.5Z" fill="#d9d9d9" stroke="#9c9c9c" stroke-width="0.6"/><path d="M3 4.5 H12 M2 6.5 H11" stroke="#bdbdbd" stroke-width="0.5"/><rect x="7.6" y="7.6" width="6.4" height="6.4" rx="1.2" fill="#e2b418"/><rect x="9.6" y="9.6" width="2.4" height="2.4" rx="0.5" fill="#fff4b8"/></svg>
<svg style="left:317px;top:25.75px" width="8.60" height="11.85" viewBox="0 0 14 14" preserveAspectRatio="none"><path d="M0.5 0.3 H7 V9 Q5 8 3.8 9.5 L0.5 12.5Z" fill="#4f80c6"/><rect x="7.6" y="7.6" width="6.4" height="6.4" rx="1.2" fill="#e2b418"/><rect x="9.6" y="9.6" width="2.4" height="2.4" rx="0.5" fill="#fff4b8"/></svg>
<svg style="left:330.6px;top:25.75px" width="10.65" height="11.85" viewBox="0 0 14 14" preserveAspectRatio="none"><path d="M0.5 1.5 Q0.5 0.5 1.5 0.5 H13.5 V13.5 H1.5 Q0.5 13.5 0.5 12.5Z" fill="#ececec" stroke="#9a9a9a" stroke-width="0.7"/><path d="M2.5 0.8 V13.2" stroke="#c8c8c8" stroke-width="0.7"/><path d="M8.5 0.5 H12 V7 L10.25 5.5 L8.5 7Z" fill="#4f80c6"/></svg>
<svg style="left:346.25px;top:25.75px" width="11.85" height="11.55" viewBox="0 0 14 14" preserveAspectRatio="none"><circle cx="7" cy="7" r="6.4" fill="#fafafa" stroke="#5a6a7a" stroke-width="0.9"/><path d="M7 2.8 V7.3 L9.8 9.2" fill="none" stroke="#4a4a4a" stroke-width="0.9"/></svg>
<svg style="left:363.75px;top:26.2px" width="11.25" height="11.00" viewBox="0 0 14 14" preserveAspectRatio="none"><path d="M1.8 7.4 A5.2 5.2 0 0 1 10.6 3" fill="none" stroke="#3a7bd0" stroke-width="2.3"/><path d="M12.2 6.6 A5.2 5.2 0 0 1 3.4 11" fill="none" stroke="#3a7bd0" stroke-width="2.3"/><path d="M8.6 0.8 L13.4 1.6 L11.8 5.8Z M5.4 13.2 L0.6 12.4 L2.2 8.2Z" fill="#3a7bd0"/></svg>
<svg style="left:411.25px;top:27px" width="10.00" height="9.60" viewBox="0 0 14 14" preserveAspectRatio="none"><rect x="0.4" y="0.4" width="9.6" height="8.6" fill="#e6e6e6" stroke="#7f7f7f" stroke-width="0.7"/><path d="M0.4 4.7 H10" stroke="#7f7f7f" stroke-width="0.7"/><rect x="3.6" y="5.2" width="10" height="8.4" fill="#f2d63c" stroke="#9a8420" stroke-width="0.5"/></svg>
<svg style="left:433px;top:26px" width="12.00" height="11.60" viewBox="0 0 14 14" preserveAspectRatio="none"><rect x="0.4" y="0.4" width="8.5" height="8.5" fill="#f2d63c" stroke="#b09a30" stroke-width="0.5"/><rect x="2.6" y="2.6" width="8.5" height="8.5" fill="#f2d63c" stroke="#b09a30" stroke-width="0.5"/><rect x="7.6" y="7.6" width="6.4" height="6.4" rx="0.6" fill="#d9342e"/><path d="M9.2 9.2 L12.4 12.4 M12.4 9.2 L9.2 12.4" stroke="#fff" stroke-width="0.8"/></svg>
<svg style="left:455.6px;top:26.4px" width="11.40" height="10.20" viewBox="0 0 14 14" preserveAspectRatio="none"><rect x="0" y="0" width="10" height="10" fill="#f2d63c" stroke="#b09a30" stroke-width="0.5"/><circle cx="11" cy="9.6" r="2.6" fill="#5b8dc8"/><path d="M11 11.5 V14" stroke="#5b8dc8" stroke-width="1.4"/></svg>
<svg style="left:485.6px;top:25.75px" width="11.90" height="11.85" viewBox="0 0 14 14" preserveAspectRatio="none"><circle cx="5.8" cy="5.8" r="5.6" fill="#4177c5"/><path d="M6.6 4.8 L5.4 9.6" stroke="#fff" stroke-width="1.5"/><circle cx="6.9" cy="2.9" r="0.95" fill="#fff"/><path d="M8 7 V14 L9.7 12.4 L10.9 14.6 L12.1 14 L11 11.9 L13.2 11.9Z" fill="#fff" stroke="#333" stroke-width="0.6"/></svg>
<svg style="left:501.9px;top:25.75px" width="11.85" height="11.25" viewBox="0 0 14 14" preserveAspectRatio="none"><rect x="0.6" y="1.5" width="12.8" height="12" fill="#f4f4f4" stroke="#4a4a4a" stroke-width="0.9"/><g fill="#d83a3a"><circle cx="4" cy="3.4" r="1.6"/><circle cx="10" cy="3.4" r="1.6"/></g><g fill="#4fa04f"><rect x="2.5" y="6" width="3" height="2"/><rect x="8.5" y="6" width="3" height="2"/></g><g fill="#4a7ac4"><rect x="2.5" y="9" width="3" height="1.8"/><rect x="8.5" y="9" width="3" height="1.8"/></g><path d="M0.6 12 H13.4" stroke="#4a4a4a" stroke-width="0.9"/></svg>
<svg style="left:536.9px;top:27px" width="8.10" height="9.40" viewBox="0 0 14 14" preserveAspectRatio="none"><path d="M1 0.8 H12.6 V3.6 M12.6 13.2 H1 L6.6 7 L1 0.8" fill="none" stroke="#9a1f9a" stroke-width="1.9"/></svg>
<svg style="left:551.9px;top:26.4px" width="11.20" height="10.60" viewBox="0 0 14 14" preserveAspectRatio="none"><rect x="0.4" y="0.4" width="13.2" height="13.2" fill="#c6daf2" stroke="#9ab8dc" stroke-width="0.6"/><path d="M0.4 4.4 H13.6 M7 4.4 V13.6 M0.4 9 H13.6" stroke="#f4f8fc" stroke-width="0.9"/></svg>
<svg style="left:573.75px;top:27.6px" width="11.85" height="8.15" viewBox="0 0 14 14" preserveAspectRatio="none"><rect x="0.5" y="0.6" width="13" height="1.8" fill="#5a7aa6"/><rect x="0" y="5.5" width="14" height="8" rx="0.6" fill="#8e8e8e"/><path d="M2 5.5 V8 M4 5.5 V7 M6 5.5 V8 M8 5.5 V7 M10 5.5 V8 M12 5.5 V7" stroke="#e2e2e2" stroke-width="0.5"/></svg>
<svg style="left:596.9px;top:25.75px" width="11.20" height="11.25" viewBox="0 0 14 14" preserveAspectRatio="none"><path d="M1.6 0.3 H12.4 Q14 0.3 14 1.9 V6.6 Q14 8.2 12.4 8.2 H5 L3 10 V8.2 H1.6 Q0 8.2 0 6.6 V1.9 Q0 0.3 1.6 0.3Z" fill="#f8e37c" stroke="#d2b84a" stroke-width="0.5"/><circle cx="2.4" cy="11.6" r="2.2" fill="#5e9a4e" stroke="#3e7a3e" stroke-width="0.4"/></svg>
<svg style="left:613px;top:25.75px" width="12.00" height="11.85" viewBox="0 0 14 14" preserveAspectRatio="none"><g opacity="0.28"><circle cx="6" cy="6" r="5" fill="none" stroke="#777" stroke-width="1.8" stroke-dasharray="1.6 1"/><circle cx="6" cy="6" r="2.2" fill="none" stroke="#888" stroke-width="0.8"/><path d="M9.5 9.5 L13.6 13.6" stroke="#777" stroke-width="1.6"/></g></svg>
<svg style="left:388px;top:26.4px" width="10.75" height="10.60" viewBox="0 0 14 14" preserveAspectRatio="none"><rect x="0.5" y="0.5" width="13" height="12.5" fill="#f4f4f4" stroke="#8a8a8a" stroke-width="0.7"/><rect x="1.5" y="1.5" width="8.8" height="8.5" fill="#f2d63c" stroke="#7a6a20" stroke-width="0.4"/></svg>
<svg style="left:393.6px;top:29.5px" width="5.00" height="7.70" viewBox="0 0 8 12" preserveAspectRatio="none"><path d="M0.5 0.5 V10 L2.8 7.9 L4.6 11.6 L6 11 L4.3 7.3 L7.4 7.3Z" fill="#fff" stroke="#222" stroke-width="0.7"/></svg>
<svg style="left:518.75px;top:25.8px" width="11.25" height="11.30" viewBox="0 0 14 14" preserveAspectRatio="none"><circle cx="7" cy="7" r="5.2" fill="none" stroke="#4f87d4" stroke-width="2.8" stroke-dasharray="2 1.4"/><circle cx="7" cy="7" r="3.9" fill="none" stroke="#4f87d4" stroke-width="1.6"/><circle cx="7" cy="7" r="1.4" fill="#e6e6e6"/></svg>
<svg style="left:402.2px;top:30.099999999999998px" width="4.4" height="2.8" viewBox="0 0 4.4 2.8"><path d="M0.2 0.3 H4.2 L2.2 2.6Z" fill="#3a3a3a"/></svg>
<svg style="left:424.8px;top:30.099999999999998px" width="4.4" height="2.8" viewBox="0 0 4.4 2.8"><path d="M0.2 0.3 H4.2 L2.2 2.6Z" fill="#3a3a3a"/></svg>
<svg style="left:447.2px;top:30.099999999999998px" width="4.4" height="2.8" viewBox="0 0 4.4 2.8"><path d="M0.2 0.3 H4.2 L2.2 2.6Z" fill="#3a3a3a"/></svg>
<svg style="left:470.05px;top:30.099999999999998px" width="4.4" height="2.8" viewBox="0 0 4.4 2.8"><path d="M0.2 0.3 H4.2 L2.2 2.6Z" fill="#3a3a3a"/></svg>
<svg style="left:566.3px;top:30.099999999999998px" width="4.4" height="2.8" viewBox="0 0 4.4 2.8"><path d="M0.2 0.3 H4.2 L2.2 2.6Z" fill="#3a3a3a"/></svg>
<svg style="left:588.4px;top:30.099999999999998px" width="4.4" height="2.8" viewBox="0 0 4.4 2.8"><path d="M0.2 0.3 H4.2 L2.2 2.6Z" fill="#3a3a3a"/></svg>
<svg style="left:627.8px;top:30.099999999999998px" width="4.4" height="2.8" viewBox="0 0 4.4 2.8"><path d="M0.2 0.3 H4.2 L2.2 2.6Z" fill="#b0b0b0"/></svg>
<svg style="left:2px;top:26px" width="3" height="11" viewBox="0 0 3 11"><g fill="#d6d6d6"><rect x="0.6" y="1" width="1.5" height="1"/><rect x="0.6" y="4" width="1.5" height="1"/><rect x="0.6" y="7" width="1.5" height="1"/><rect x="0.6" y="10" width="1.5" height="1"/></g></svg>
<svg style="left:109.6px;top:26px" width="3" height="11" viewBox="0 0 3 11"><g fill="#d6d6d6"><rect x="0.6" y="1" width="1.5" height="1"/><rect x="0.6" y="4" width="1.5" height="1"/><rect x="0.6" y="7" width="1.5" height="1"/><rect x="0.6" y="10" width="1.5" height="1"/></g></svg>
<svg style="left:380.9px;top:26px" width="3" height="11" viewBox="0 0 3 11"><g fill="#d6d6d6"><rect x="0.6" y="1" width="1.5" height="1"/><rect x="0.6" y="4" width="1.5" height="1"/><rect x="0.6" y="7" width="1.5" height="1"/><rect x="0.6" y="10" width="1.5" height="1"/></g></svg>
<svg style="left:479px;top:26px" width="3" height="11" viewBox="0 0 3 11"><g fill="#d6d6d6"><rect x="0.6" y="1" width="1.5" height="1"/><rect x="0.6" y="4" width="1.5" height="1"/><rect x="0.6" y="7" width="1.5" height="1"/><rect x="0.6" y="10" width="1.5" height="1"/></g></svg>
<svg style="left:8px;top:45px" width="12.60" height="12.00" viewBox="0 0 14 14" preserveAspectRatio="none"><rect x="0.5" y="4" width="7.5" height="8" transform="rotate(-18 4 8)" fill="#e0613a"/><rect x="2.5" y="2.5" width="7.5" height="8" transform="rotate(-8 6 6.5)" fill="#f2c232"/><rect x="4.8" y="0.4" width="7.6" height="7.8" fill="#5b8ccf"/><rect x="8" y="8" width="6" height="6" fill="#4da04d"/><path d="M11 9 V13 M9 11 H13" stroke="#fff" stroke-width="1.1"/></svg>
<svg style="left:25px;top:45px" width="12.50" height="12.00" viewBox="0 0 14 14" preserveAspectRatio="none"><path d="M0.3 5.2 L6.5 2.6 L13.7 5.2 V10.6 L6.5 13.7 L0.3 10.6Z" fill="#dcb222" stroke="#9c7c10" stroke-width="0.4"/><path d="M0.3 5.2 L6.5 8 L13.7 5.2" fill="#f2d456" stroke="#9c7c10" stroke-width="0.4"/><ellipse cx="7" cy="4.2" rx="4" ry="3.8" fill="#5b8bcf"/><path d="M4.5 3 Q7 5 9.5 3" fill="none" stroke="#cfe0f6" stroke-width="0.5"/><rect x="7.6" y="7.6" width="6.4" height="6.4" rx="1.2" fill="#e2b418"/><rect x="9.6" y="9.6" width="2.4" height="2.4" rx="0.5" fill="#fff4b8"/></svg>
<svg style="left:41px;top:45px" width="13.00" height="12.00" viewBox="0 0 14 14" preserveAspectRatio="none"><path d="M0.5 0.8 L5.2 12.8 L9 2.5 L13.5 1" fill="none" stroke="#3f3f3f" stroke-width="1.1"/><circle cx="13" cy="1.2" r="1" fill="#3f3f3f"/><circle cx="0.8" cy="1" r="0.8" fill="#3f3f3f"/><rect x="7.6" y="7.6" width="6.4" height="6.4" rx="1.2" fill="#e2b418"/><rect x="9.6" y="9.6" width="2.4" height="2.4" rx="0.5" fill="#fff4b8"/></svg>
<svg style="left:57.5px;top:45px" width="12.50" height="12.00" viewBox="0 0 14 14" preserveAspectRatio="none"><path d="M0.5 13.5 Q2 7 13.5 0.5 Q12 8 3 12" fill="#5b8bcf" stroke="#3a6ab2" stroke-width="0.4"/><path d="M0.5 13.5 L9 5" stroke="#2a4a82" stroke-width="0.5"/><rect x="7.6" y="7.6" width="6.4" height="6.4" rx="1.2" fill="#e2b418"/><rect x="9.6" y="9.6" width="2.4" height="2.4" rx="0.5" fill="#fff4b8"/></svg>
<svg style="left:75px;top:45px" width="11.00" height="12.00" viewBox="0 0 14 14" preserveAspectRatio="none"><rect x="0.3" y="3.2" width="12" height="7.5" rx="1.6" fill="#5b8bcf"/><path d="M3 3.2 V1.2 M6 3.2 V1.2 M9 3.2 V1.2" stroke="#6f6f6f" stroke-width="0.8"/><rect x="7.6" y="7.6" width="6.4" height="6.4" rx="1.2" fill="#e2b418"/><rect x="9.6" y="9.6" width="2.4" height="2.4" rx="0.5" fill="#fff4b8"/></svg>
<svg style="left:91px;top:45px" width="12.00" height="12.00" viewBox="0 0 14 14" preserveAspectRatio="none"><rect x="0" y="0" width="13" height="13" fill="#3c64a6"/><path d="M0 3.2 H13 M0 6.5 H13 M0 9.8 H13 M3.2 0 V13 M6.5 0 V13 M9.8 0 V13" stroke="#93b3de" stroke-width="0.5"/><path d="M0.5 12 L12 1" stroke="#9ab8e2" stroke-width="0.6"/><rect x="7.6" y="7.6" width="6.4" height="6.4" rx="1.2" fill="#e2b418"/><rect x="9.6" y="9.6" width="2.4" height="2.4" rx="0.5" fill="#fff4b8"/></svg>
<svg style="left:107.5px;top:45px" width="11.90" height="12.00" viewBox="0 0 14 14" preserveAspectRatio="none"><rect x="0.3" y="0.3" width="12.6" height="12.6" fill="#9dbde6" stroke="#5f87c4" stroke-width="0.6"/><path d="M2.5 1.5 L6.5 10.5 L10.5 1.5" fill="none" stroke="#3a3a3a" stroke-width="0.8"/><rect x="7.6" y="7.6" width="6.4" height="6.4" rx="1.2" fill="#e2b418"/><rect x="9.6" y="9.6" width="2.4" height="2.4" rx="0.5" fill="#fff4b8"/></svg>
<svg style="left:132.5px;top:45px" width="10.00" height="12.00" viewBox="0 0 14 14" preserveAspectRatio="none"><g opacity="0.3"><path d="M1 12 L9.6 1 L13 3.6 L4.4 14Z" fill="#9a9a9a"/><path d="M3 11 L11 2" stroke="#ddd" stroke-width="0.6"/></g></svg>
<svg style="left:149px;top:45px" width="9.00" height="12.00" viewBox="0 0 14 14" preserveAspectRatio="none"><path d="M0.5 13.6 L1.5 10 L10.4 0.5 L13.5 3.2 L4.6 12.6Z" fill="#f2d33a" stroke="#6a5a20" stroke-width="0.6"/><path d="M0.5 13.6 L1.5 10 L4.6 12.6Z" fill="#4a4a4a"/></svg>
<svg style="left:165px;top:45px" width="11.00" height="12.00" viewBox="0 0 14 14" preserveAspectRatio="none"><g opacity="0.22"><rect x="0.4" y="0.4" width="13" height="13" rx="1" fill="#888"/><rect x="2.8" y="1.2" width="8" height="4.4" fill="#e0e0e0"/><rect x="2.2" y="7.4" width="9.6" height="5" fill="#f4f4f4"/></g></svg>
<svg style="left:182.5px;top:45.75px" width="10.50" height="10.00" viewBox="0 0 14 14" preserveAspectRatio="none"><g opacity="0.3"><path d="M1.2 12.8 L12.8 1.2" stroke="#888" stroke-width="0.9"/><circle cx="1.2" cy="12.8" r="1.1" fill="#888"/><circle cx="12.8" cy="1.2" r="1.1" fill="#888"/></g></svg>
<svg style="left:204.4px;top:45.75px" width="11.85" height="10.25" viewBox="0 0 14 14" preserveAspectRatio="none"><g opacity="0.3" fill="#8a8a8a"><circle cx="6" cy="2" r="1.6"/><circle cx="11.5" cy="4" r="1.6"/><circle cx="1.8" cy="7.5" r="1.6"/><rect x="6.5" y="8" width="5.5" height="5.5" fill="none" stroke="#8a8a8a" stroke-width="1"/></g></svg>
<svg style="left:221px;top:45.75px" width="10.25" height="10.25" viewBox="0 0 14 14" preserveAspectRatio="none"><g opacity="0.3"><path d="M1 1 L5 13 L9 1" fill="none" stroke="#777" stroke-width="0.9"/><path d="M7 7 L13 13 M13 7 L7 13" stroke="#666" stroke-width="1.1"/><rect x="1" y="0.5" width="6" height="1.5" fill="#888"/></g></svg>
<svg style="left:243.75px;top:45.75px" width="10.65" height="10.65" viewBox="0 0 14 14" preserveAspectRatio="none"><g opacity="0.3"><rect x="0.5" y="0.5" width="13" height="13" fill="#b8b09a"/><path d="M1 13 L13 1 M5 13 L13 5" stroke="#f4f4f4" stroke-width="0.9"/></g></svg>
<svg style="left:260px;top:45.75px" width="10.00" height="10.65" viewBox="0 0 14 14" preserveAspectRatio="none"><g opacity="0.33"><rect x="2" y="3.5" width="10" height="10.5" rx="0.5" fill="#c49a88"/><rect x="0.5" y="1.6" width="13" height="1.8" fill="#b08a78"/><rect x="5" y="0" width="4" height="1.8" fill="#b08a78"/><path d="M5 5 V12 M7 5 V12 M9 5 V12" stroke="#f0e0d8" stroke-width="0.6"/></g></svg>
<svg style="left:276.25px;top:46.4px" width="11.25" height="9.20" viewBox="0 0 14 14" preserveAspectRatio="none"><g opacity="0.33" fill="none" stroke="#6a6a6a" stroke-width="1"><circle cx="2.6" cy="11" r="2.2"/><circle cx="11.4" cy="11" r="2.2"/><path d="M4.2 9.4 L12 1 M9.8 9.4 L2 1"/></g></svg>
<svg style="left:293.75px;top:46px" width="9.25" height="10.00" viewBox="0 0 14 14" preserveAspectRatio="none"><g opacity="0.3" fill="#f2f2f2" stroke="#7a7a7a" stroke-width="0.8"><rect x="0.5" y="0.5" width="8" height="9.5"/><rect x="5.5" y="4" width="8" height="9.5"/></g></svg>
<svg style="left:310.6px;top:46px" width="8.80" height="10.00" viewBox="0 0 14 14" preserveAspectRatio="none"><g opacity="0.3" fill="#f2f2f2" stroke="#7a7a7a" stroke-width="0.8"><rect x="0.5" y="1.5" width="13" height="12"/><rect x="4" y="0.4" width="6" height="3"/><path d="M3 6 H11 M3 8.5 H11 M3 11 H9" /></g></svg>
<svg style="left:326.9px;top:46.4px" width="9.35" height="9.10" viewBox="0 0 14 14" preserveAspectRatio="none"><g opacity="0.33"><path d="M4 5 H9 Q13.4 5 13.4 9 Q13.4 13.4 8 13.4" fill="none" stroke="#9a6a5a" stroke-width="2.4"/><path d="M0.2 5 L5 0.4 V9.6Z" fill="#9a6a5a"/></g></svg>
<svg style="left:343px;top:46.4px" width="9.50" height="9.10" viewBox="0 0 14 14" preserveAspectRatio="none"><g opacity="0.33"><path d="M10 5 H5 Q0.6 5 0.6 9 Q0.6 13.4 6 13.4" fill="none" stroke="#6a8a7a" stroke-width="2.4"/><path d="M13.8 5 L9 0.4 V9.6Z" fill="#6a8a7a"/></g></svg>
<svg style="left:365.6px;top:46.8px" width="11.30" height="6.00" viewBox="0 0 14 14" preserveAspectRatio="none"><g opacity="1"><path d="M0.3 7 L3.8 1 H13.7 V13 H3.8Z" fill="#f4d24a" stroke="#b39020" stroke-width="0.6"/><text x="4.2" y="10.2" font-size="7.2" font-weight="700" font-family="Liberation Sans" fill="#2a2a2a" textLength="8.6" lengthAdjust="spacingAndGlyphs">abc</text></g></svg>
<svg style="left:383.75px;top:45.75px" width="10.65" height="10.65" viewBox="0 0 14 14" preserveAspectRatio="none"><circle cx="5.6" cy="5.6" r="5.4" fill="#dc3c2c"/><path d="M5.6 5.6 V0.2 A5.4 5.4 0 0 1 11 5.6Z" fill="#3fa04a"/><path d="M5.6 5.6 L0.2 5.6 A5.4 5.4 0 0 0 3 10.2Z" fill="#f0c02c"/><rect x="7.8" y="7" width="2.6" height="7" fill="#3fa04a"/><rect x="10.6" y="9.5" width="2.6" height="4.5" fill="#dc3c2c"/><rect x="5" y="10" width="2.6" height="4" fill="#f0c02c"/></svg>
<svg style="left:403px;top:47px" width="12.00" height="9.40" viewBox="0 0 14 14" preserveAspectRatio="none"><path d="M0.3 4.5 L2.8 0.5 H11 V8.5 H2.8Z" fill="#a9c8ee" stroke="#5b8ac8" stroke-width="0.6"/><text x="3.2" y="6.6" font-size="5" font-weight="700" font-family="Liberation Sans" fill="#2a2a2a">ab</text><circle cx="10.6" cy="10.8" r="3" fill="#b82424"/></svg>
<svg style="left:419.4px;top:46.8px" width="11.20" height="6.00" viewBox="0 0 14 14" preserveAspectRatio="none"><g opacity="1"><path d="M0.3 7 L3.8 1 H13.7 V13 H3.8Z" fill="#ea4848" stroke="#b82222" stroke-width="0.6"/><text x="4.2" y="10.2" font-size="7.2" font-weight="700" font-family="Liberation Sans" fill="#fff" textLength="8.6" lengthAdjust="spacingAndGlyphs">abc</text></g></svg>
<svg style="left:439.4px;top:47px" width="11.85" height="9.00" viewBox="0 0 14 14" preserveAspectRatio="none"><g opacity="0.32"><path d="M0.3 4.5 L2.8 0.5 H12 V8.5 H2.8Z" fill="#d6d6d6" stroke="#9a9a9a" stroke-width="0.6"/><text x="3.4" y="6.6" font-size="5" font-weight="700" font-family="Liberation Sans" fill="#777">abc</text><rect x="8" y="8.5" width="5.5" height="5" rx="1" fill="#bbb"/></g></svg>
<svg style="left:455.6px;top:47px" width="11.90" height="9.00" viewBox="0 0 14 14" preserveAspectRatio="none"><g opacity="0.32"><path d="M0.3 4.5 L2.8 0.5 H12 V8.5 H2.8Z" fill="#d6d6d6" stroke="#9a9a9a" stroke-width="0.6"/><text x="3.4" y="6.6" font-size="5" font-weight="700" font-family="Liberation Sans" fill="#777">abc</text><rect x="8" y="8.5" width="5.5" height="5" rx="1" fill="#bbb"/></g></svg>
<svg style="left:471.9px;top:47px" width="11.10" height="9.00" viewBox="0 0 14 14" preserveAspectRatio="none"><g opacity="0.32"><path d="M0.3 4.5 L2.8 0.5 H12 V8.5 H2.8Z" fill="#d6d6d6" stroke="#9a9a9a" stroke-width="0.6"/><text x="3.4" y="6.6" font-size="5" font-weight="700" font-family="Liberation Sans" fill="#777">abc</text><rect x="8" y="8.5" width="5.5" height="5" rx="1" fill="#bbb"/></g></svg>
<svg style="left:488.75px;top:47px" width="11.25" height="9.00" viewBox="0 0 14 14" preserveAspectRatio="none"><g opacity="0.32"><path d="M0.3 4.5 L2.8 0.5 H12 V8.5 H2.8Z" fill="#d6d6d6" stroke="#9a9a9a" stroke-width="0.6"/><text x="3.4" y="6.6" font-size="5" font-weight="700" font-family="Liberation Sans" fill="#777">abc</text><rect x="8" y="8.5" width="5.5" height="5" rx="1" fill="#bbb"/></g></svg>
<svg style="left:505px;top:47px" width="12.50" height="9.00" viewBox="0 0 14 14" preserveAspectRatio="none"><g opacity="0.32"><path d="M0.3 4.5 L2.8 0.5 H12 V8.5 H2.8Z" fill="#d6d6d6" stroke="#9a9a9a" stroke-width="0.6"/><text x="3.4" y="6.6" font-size="5" font-weight="700" font-family="Liberation Sans" fill="#777">abc</text><rect x="8" y="8.5" width="5.5" height="5" rx="1" fill="#bbb"/></g></svg>
<svg style="left:529.4px;top:45px" width="13.10" height="12.00" viewBox="0 0 14 14" preserveAspectRatio="none"><circle cx="7" cy="6.2" r="6" fill="#3366a2"/><path d="M1.5 4.5 Q4 3 6 5 Q8.5 7.2 12.5 4.5 M7 0.4 Q4 6 7 12" fill="none" stroke="#9cc0ea" stroke-width="0.6"/><ellipse cx="3.4" cy="11.6" rx="2.6" ry="2" fill="#111"/><ellipse cx="10.6" cy="11.6" rx="2.6" ry="2" fill="#111"/><rect x="5" y="9.6" width="4" height="1.8" fill="#111"/></svg>
<svg style="left:555px;top:45.75px" width="10.60" height="10.65" viewBox="0 0 14 14" preserveAspectRatio="none"><path d="M7 0.3 Q2.8 0.3 2.8 2.6 V4.6 H7.2 V5.4 H1.8 Q0 5.6 0 8.4 Q0 11 1.8 11 H3.4 V9 Q3.4 7.4 5 7.4 H9.2 Q10.8 7.4 10.8 5.8 V2.6 Q10.8 0.3 7 0.3Z" fill="#3a71b0"/><path d="M7 13.7 Q11.2 13.7 11.2 11.4 V9.4 H6.8 V8.6 H12.2 Q14 8.4 14 5.6 Q14 3 12.2 3 H10.6 V5 Q10.6 6.6 9 6.6 H4.8 Q3.2 6.6 3.2 8.2 V11.4 Q3.2 13.7 7 13.7Z" fill="#f2ca3a"/><circle cx="5" cy="2" r="0.7" fill="#fff"/><circle cx="9" cy="12" r="0.7" fill="#fff"/></svg>
<svg style="left:608.1px;top:45px" width="10.65" height="11.40" viewBox="0 0 14 14" preserveAspectRatio="none"><rect x="0" y="0" width="14" height="14" fill="#3464a6"/><rect x="0" y="0" width="2.6" height="14" fill="#16305a"/><text x="5.6" y="10.6" font-size="9" font-family="Liberation Sans" fill="#d8e6f8">?</text></svg>
<svg style="left:632px;top:45.2px" width="12.50" height="11.50" viewBox="0 0 14 14" preserveAspectRatio="none"><path d="M2 4 Q5 0.5 11 1.5 Q13.5 4 12 8 Q9 11.5 3 10.5 Q0.5 8 2 4Z" fill="#4d7ec4" stroke="#345a94" stroke-width="0.4"/><path d="M1.5 1.5 L12 1.5 M1.5 1.5 L2 12" stroke="#666" stroke-width="0.4"/><g fill="#f0d234" stroke="#a08a20" stroke-width="0.3"><circle cx="1.5" cy="1.5" r="1.4"/><circle cx="12" cy="1.5" r="1.4"/><circle cx="1.8" cy="12.4" r="1.4"/><circle cx="6" cy="4.5" r="1"/></g><path d="M7 10.5 L9 13.2 L13.6 6.5" fill="none" stroke="#333" stroke-width="1.2"/><path d="M7 10.5 L9 13.2 L13.6 6.5" fill="none" stroke="#f0d234" stroke-width="0.6"/></svg>
<svg style="left:656px;top:44.7px" width="12.40" height="12.50" viewBox="0 0 14 14" preserveAspectRatio="none"><rect x="0" y="0" width="14" height="14" rx="0.6" fill="#62b552"/><circle cx="8" cy="6" r="3.9" fill="#88cc78" stroke="#fff" stroke-width="1.2"/><path d="M5.2 8.8 L1.8 12.2" stroke="#fff" stroke-width="1.5"/></svg>
<svg style="left:672.6px;top:44.7px" width="12.50" height="12.50" viewBox="0 0 14 14" preserveAspectRatio="none"><rect x="0" y="0" width="14" height="14" fill="#f2d25a"/><path d="M0 8 L2 7 L3 11 L1 14 H0Z" fill="#c85aa0"/><path d="M6 6 L10 4 L14 7 V14 H8 L9 10Z" fill="#5a90d8"/><path d="M1 2 L4 1 L5 4 L2 5Z" fill="#6ab04a"/><path d="M2 7 L5 6 L6 9 L3 10Z" fill="#5a90d8"/><path d="M5.5 13 L13.5 0.5" stroke="#8a4a1a" stroke-width="2"/><path d="M5.5 13 L7 10.5" stroke="#d8a060" stroke-width="1.2"/></svg>
<svg style="left:196.3px;top:49.7px" width="4.4" height="2.8" viewBox="0 0 4.4 2.8"><path d="M0.2 0.3 H4.2 L2.2 2.6Z" fill="#a8a8a8"/></svg>
<svg style="left:235.05px;top:49.7px" width="4.4" height="2.8" viewBox="0 0 4.4 2.8"><path d="M0.2 0.3 H4.2 L2.2 2.6Z" fill="#a8a8a8"/></svg>
<svg style="left:2px;top:45.5px" width="3" height="11.0" viewBox="0 0 3 11.0"><g fill="#d6d6d6"><rect x="0.6" y="1" width="1.5" height="1"/><rect x="0.6" y="4" width="1.5" height="1"/><rect x="0.6" y="7" width="1.5" height="1"/><rect x="0.6" y="10" width="1.5" height="1"/></g></svg>
<svg style="left:125px;top:45.5px" width="3" height="11.0" viewBox="0 0 3 11.0"><g fill="#d6d6d6"><rect x="0.6" y="1" width="1.5" height="1"/><rect x="0.6" y="4" width="1.5" height="1"/><rect x="0.6" y="7" width="1.5" height="1"/><rect x="0.6" y="10" width="1.5" height="1"/></g></svg>
<svg style="left:360px;top:45.5px" width="3" height="11.0" viewBox="0 0 3 11.0"><g fill="#d6d6d6"><rect x="0.6" y="1" width="1.5" height="1"/><rect x="0.6" y="4" width="1.5" height="1"/><rect x="0.6" y="7" width="1.5" height="1"/><rect x="0.6" y="10" width="1.5" height="1"/></g></svg>
<svg style="left:397px;top:45.5px" width="3" height="11.0" viewBox="0 0 3 11.0"><g fill="#d6d6d6"><rect x="0.6" y="1" width="1.5" height="1"/><rect x="0.6" y="4" width="1.5" height="1"/><rect x="0.6" y="7" width="1.5" height="1"/><rect x="0.6" y="10" width="1.5" height="1"/></g></svg>
<svg style="left:434.6px;top:45.5px" width="3" height="11.0" viewBox="0 0 3 11.0"><g fill="#d6d6d6"><rect x="0.6" y="1" width="1.5" height="1"/><rect x="0.6" y="4" width="1.5" height="1"/><rect x="0.6" y="7" width="1.5" height="1"/><rect x="0.6" y="10" width="1.5" height="1"/></g></svg>
<svg style="left:524px;top:45.5px" width="3" height="11.0" viewBox="0 0 3 11.0"><g fill="#d6d6d6"><rect x="0.6" y="1" width="1.5" height="1"/><rect x="0.6" y="4" width="1.5" height="1"/><rect x="0.6" y="7" width="1.5" height="1"/><rect x="0.6" y="10" width="1.5" height="1"/></g></svg>
<svg style="left:547.75px;top:45.5px" width="3" height="11.0" viewBox="0 0 3 11.0"><g fill="#d6d6d6"><rect x="0.6" y="1" width="1.5" height="1"/><rect x="0.6" y="4" width="1.5" height="1"/><rect x="0.6" y="7" width="1.5" height="1"/><rect x="0.6" y="10" width="1.5" height="1"/></g></svg>
<svg style="left:601.5px;top:45.5px" width="3" height="11.0" viewBox="0 0 3 11.0"><g fill="#d6d6d6"><rect x="0.6" y="1" width="1.5" height="1"/><rect x="0.6" y="4" width="1.5" height="1"/><rect x="0.6" y="7" width="1.5" height="1"/><rect x="0.6" y="10" width="1.5" height="1"/></g></svg>
<svg style="left:625.8px;top:45.5px" width="3" height="11.0" viewBox="0 0 3 11.0"><g fill="#d6d6d6"><rect x="0.6" y="1" width="1.5" height="1"/><rect x="0.6" y="4" width="1.5" height="1"/><rect x="0.6" y="7" width="1.5" height="1"/><rect x="0.6" y="10" width="1.5" height="1"/></g></svg>
<svg style="left:649.7px;top:45.5px" width="3" height="11.0" viewBox="0 0 3 11.0"><g fill="#d6d6d6"><rect x="0.6" y="1" width="1.5" height="1"/><rect x="0.6" y="4" width="1.5" height="1"/><rect x="0.6" y="7" width="1.5" height="1"/><rect x="0.6" y="10" width="1.5" height="1"/></g></svg>
<div class="t" style="left:572.5px;top:48.65px;font-size:6.2px;color:#333;font-weight:400;transform:scaleX(0.781);transform-origin:0 0;">Go To XY</div>
<svg style="left:3.75px;top:73.75px" width="7.95" height="7.95" viewBox="0 0 14 14" preserveAspectRatio="none"><rect x="0.5" y="0.5" width="11" height="11" fill="#f6f6f6" stroke="#8a8a8a" stroke-width="0.8"/><circle cx="11" cy="11" r="3" fill="#4da04d"/><path d="M9.5 11 H12.5" stroke="#fff" stroke-width="0.8"/></svg>
<svg style="left:16.7px;top:73.9px" width="7.50" height="7.60" viewBox="0 0 14 14" preserveAspectRatio="none"><path d="M1.8 7.4 A5.2 5.2 0 0 1 10.6 3" fill="none" stroke="#3a7bd0" stroke-width="2.3"/><path d="M12.2 6.6 A5.2 5.2 0 0 1 3.4 11" fill="none" stroke="#3a7bd0" stroke-width="2.3"/><path d="M8.6 0.8 L13.4 1.6 L11.8 5.8Z M5.4 13.2 L0.6 12.4 L2.2 8.2Z" fill="#3a7bd0"/></svg>
<svg style="left:29.6px;top:73.75px" width="7.10" height="7.95" viewBox="0 0 14 14" preserveAspectRatio="none"><rect x="0" y="0" width="14" height="2.4" fill="#e8c83a"/><path d="M0 2.4 H14 L8.6 8 V14 L5.4 12.5 V8Z" fill="#3a78c8"/></svg>
<svg style="left:41.7px;top:73.75px" width="8.30" height="7.95" viewBox="0 0 14 14" preserveAspectRatio="none"><rect x="0.5" y="3" width="6.5" height="10.5" fill="#f4f4f4" stroke="#aaa" stroke-width="0.5"/><rect x="1.5" y="8" width="3" height="4.5" fill="#f0a830"/><path d="M9.5 14 V5 M5.5 8 L9.5 2 L13.5 8" fill="none" stroke="#3a78c8" stroke-width="2.4"/></svg>
<svg style="left:54.6px;top:73.9px" width="6.65" height="7.70" viewBox="0 0 14 14" preserveAspectRatio="none"><circle cx="7" cy="7" r="6.8" fill="#4177c5"/><path d="M7.8 5.6 L6.3 11" stroke="#fff" stroke-width="1.8"/><circle cx="8.2" cy="3.4" r="1.1" fill="#fff"/></svg>
<svg style="left:4.6px;top:148px" width="7.20" height="7.30" viewBox="0 0 14 14" preserveAspectRatio="none"><path d="M1 13 L10 4" stroke="#9a6a30" stroke-width="1.8"/><path d="M8 3 L13.5 0.5 L11 6Z" fill="#e8b830"/><path d="M0.5 9 Q4 6 8 8 L6 13 Q2 13 0.5 9Z" fill="#e04a3a"/><path d="M3 7 Q6 5 9 6.5 L8 8.5 Q4 7.5 3 7Z" fill="#3a78c8"/></svg>
<svg style="left:17.3px;top:147.5px" width="6.40" height="8.20" viewBox="0 0 14 14" preserveAspectRatio="none"><path d="M2 0.5 H9 L12 3.5 V13.5 H2Z" fill="#dcdcdc" stroke="#888" stroke-width="0.6"/><path d="M4 5 H10 M4 8 H10" stroke="#999" stroke-width="0.6"/><rect x="8" y="8.5" width="6" height="5.5" fill="#4da04d"/></svg>
<svg style="left:30px;top:148px" width="7.40" height="7.30" viewBox="0 0 14 14" preserveAspectRatio="none"><ellipse cx="6.5" cy="6.5" rx="6.3" ry="4.3" fill="#6a7ea8"/><circle cx="6.5" cy="6.5" r="2.2" fill="#f4f4f4"/><circle cx="6.5" cy="6.5" r="1" fill="#333"/><path d="M9.5 10.5 H14 L11.75 13.5Z" fill="#333"/></svg>
<svg style="left:42px;top:147.5px" width="8.00" height="8.00" viewBox="0 0 14 14" preserveAspectRatio="none"><rect x="0" y="0" width="12" height="2.4" fill="#e8c83a"/><path d="M0 2.4 H12 L7.4 7.5 V13 L4.6 11.6 V7.5Z" fill="#3a78c8"/><path d="M9.5 11 H14 L11.75 13.8Z" fill="#333"/></svg>
<svg style="left:54.7px;top:148px" width="7.30" height="7.30" viewBox="0 0 14 14" preserveAspectRatio="none"><g opacity="0.3"><path d="M1 1 H6 M1 1 V6" stroke="#555" stroke-width="1"/><rect x="5" y="6" width="7" height="7" fill="none" stroke="#555" stroke-width="1"/></g></svg>
<svg style="left:73.8px;top:147.5px" width="6.40" height="8.20" viewBox="0 0 14 14" preserveAspectRatio="none"><rect x="0.5" y="2" width="6" height="11.5" fill="#f4f4f4" stroke="#aaa" stroke-width="0.5"/><rect x="1.5" y="7" width="3" height="5" fill="#f0a830"/><path d="M9.5 0 V10 M5.5 6.5 L9.5 12.5 L13.5 6.5" fill="none" stroke="#3a78c8" stroke-width="2.4"/></svg>
<svg style="left:85.7px;top:147.5px" width="7.30" height="8.20" viewBox="0 0 14 14" preserveAspectRatio="none"><rect x="0.5" y="2" width="6" height="11.5" fill="#f4f4f4" stroke="#aaa" stroke-width="0.5"/><rect x="1.5" y="7" width="3" height="5" fill="#f0a830"/><path d="M9.5 14 V4 M5.5 7.5 L9.5 1.5 L13.5 7.5" fill="none" stroke="#3a78c8" stroke-width="2.4"/></svg>
<svg style="left:97.5px;top:148px" width="7.30" height="7.30" viewBox="0 0 14 14" preserveAspectRatio="none"><rect x="0.5" y="0.5" width="10.5" height="10.5" fill="#fafafa" stroke="#8a8a8a" stroke-width="0.8"/><circle cx="11" cy="11" r="3" fill="#d83a3a"/></svg>
<svg style="left:64.3px;top:150.2px" width="4.4" height="2.8" viewBox="0 0 4.4 2.8"><path d="M0.2 0.3 H4.2 L2.2 2.6Z" fill="#a0a0a0"/></svg>
<svg style="left:640.3px;top:74.2px" width="8.40" height="7.90" viewBox="0 0 14 14" preserveAspectRatio="none"><circle cx="4.2" cy="4.4" r="4" fill="#d42a2a"/><circle cx="9.4" cy="7.4" r="3.4" fill="#7a7a7a"/><circle cx="4.4" cy="11" r="2.6" fill="#8ab0e0"/><path d="M10 11.6 H14 L12 14Z" fill="#333"/></svg>
<svg style="left:653.5px;top:74.2px" width="7.90" height="7.90" viewBox="0 0 14 14" preserveAspectRatio="none"><path d="M7 0.3 Q2.8 0.3 2.8 2.6 V4.6 H7.2 V5.4 H1.8 Q0 5.6 0 8.4 Q0 11 1.8 11 H3.4 V9 Q3.4 7.4 5 7.4 H9.2 Q10.8 7.4 10.8 5.8 V2.6 Q10.8 0.3 7 0.3Z" fill="#3a71b0"/><path d="M7 13.7 Q11.2 13.7 11.2 11.4 V9.4 H6.8 V8.6 H12.2 Q14 8.4 14 5.6 Q14 3 12.2 3 H10.6 V5 Q10.6 6.6 9 6.6 H4.8 Q3.2 6.6 3.2 8.2 V11.4 Q3.2 13.7 7 13.7Z" fill="#f2ca3a"/><circle cx="5" cy="2" r="0.7" fill="#fff"/><circle cx="9" cy="12" r="0.7" fill="#fff"/><path d="M10 11.6 H14 L12 14Z" fill="#333"/></svg>
<svg style="left:665.6px;top:74.2px" width="8.40" height="7.90" viewBox="0 0 14 14" preserveAspectRatio="none"><circle cx="7" cy="7" r="6.4" fill="#f8f8f8" stroke="#9a9a9a" stroke-width="0.9"/><path d="M7 2.8 V7.3 L9.8 9.2" fill="none" stroke="#8a8a8a" stroke-width="0.9"/></svg>
<svg style="left:678.7px;top:74.2px" width="6.30" height="7.90" viewBox="0 0 14 14" preserveAspectRatio="none"><path d="M1 0.5 H9 L13 4.5 V13.5 H1Z" fill="#eeeeee" stroke="#b0b0b0" stroke-width="0.7"/><path d="M3.5 6 H10.5 M3.5 8.5 H10.5 M3.5 11 H10.5" stroke="#c4c4c4" stroke-width="0.7"/></svg>
<svg style="left:694px;top:74.2px" width="7.40" height="7.90" viewBox="0 0 14 14" preserveAspectRatio="none"><path d="M1 1 H10 Q13.5 1 13.5 5 V7 Q13.5 10 10 10 H6.5 L5 13.5 L3.8 10 H1Z" fill="#f2d42e" stroke="#c0a020" stroke-width="0.5"/></svg>
<svg style="left:709.8px;top:74.2px" width="8.20" height="7.90" viewBox="0 0 14 14" preserveAspectRatio="none"><path d="M1.5 1.5 L12.5 12.5" stroke="#6a6a6a" stroke-width="1.6"/><path d="M0 3 L3 0 L5.5 2.5 L2.5 5.5Z" fill="#9a9a9a"/><path d="M8.5 11 L11 8.5 L14 11.5 L11.5 14Z" fill="#e2a222"/></svg>
<div class="r" style="left:689.5px;top:75px;width:0.6px;height:7px;background:#d4d4d4"></div>
<div class="r" style="left:705.8px;top:75px;width:0.6px;height:7px;background:#d4d4d4"></div>
<svg style="left:641px;top:280px" width="7.00" height="8.00" viewBox="0 0 14 14" preserveAspectRatio="none"><g opacity="0.3"><rect x="1" y="1" width="12" height="12" fill="none" stroke="#666" stroke-width="1.2"/><path d="M4 5 H10 M4 9 H10" stroke="#666" stroke-width="1.2"/></g></svg>
<svg style="left:657px;top:280px" width="7.00" height="8.00" viewBox="0 0 14 14" preserveAspectRatio="none"><rect x="0.5" y="2" width="6" height="11.5" fill="#f4f4f4" stroke="#aaa" stroke-width="0.5"/><rect x="1.5" y="7" width="3" height="5" fill="#f0a830"/><path d="M9.5 0 V10 M5.5 6.5 L9.5 12.5 L13.5 6.5" fill="none" stroke="#3a78c8" stroke-width="2.4"/></svg>
<svg style="left:669.5px;top:280px" width="8.10" height="8.00" viewBox="0 0 14 14" preserveAspectRatio="none"><rect x="0.5" y="2" width="6" height="11.5" fill="#f4f4f4" stroke="#aaa" stroke-width="0.5"/><rect x="1.5" y="7" width="3" height="5" fill="#f0a830"/><path d="M9.5 14 V4 M5.5 7.5 L9.5 1.5 L13.5 7.5" fill="none" stroke="#3a78c8" stroke-width="2.4"/></svg>
<svg style="left:682px;top:280px" width="7.30" height="8.00" viewBox="0 0 14 14" preserveAspectRatio="none"><circle cx="3.5" cy="4" r="3.2" fill="#f2d42e"/><path d="M9.5 0 V10 M5.5 6.5 L9.5 12.5 L13.5 6.5" fill="none" stroke="#3a78c8" stroke-width="2.4"/></svg>
<svg style="left:697.4px;top:280px" width="8.10" height="8.50" viewBox="0 0 14 14" preserveAspectRatio="none"><rect x="0.4" y="0.4" width="8.5" height="8.5" fill="#f2d63c" stroke="#b09a30" stroke-width="0.5"/><rect x="2.6" y="2.6" width="8.5" height="8.5" fill="#f2d63c" stroke="#b09a30" stroke-width="0.5"/><rect x="7.6" y="7.6" width="6.4" height="6.4" rx="0.6" fill="#d9342e"/><path d="M9.2 9.2 L12.4 12.4 M12.4 9.2 L9.2 12.4" stroke="#fff" stroke-width="0.8"/></svg>
<svg style="left:713.5px;top:280px" width="7.20" height="8.00" viewBox="0 0 14 14" preserveAspectRatio="none"><g opacity="0.3"><path d="M2 0.5 H9 L12 3.5 V13.5 H2Z" fill="#eee" stroke="#777" stroke-width="1"/></g></svg>
<svg style="left:726px;top:280.5px" width="8.00" height="7.00" viewBox="0 0 14 14" preserveAspectRatio="none"><g opacity="0.3"><rect x="0.5" y="5" width="13" height="6" rx="1" fill="#8a8a8a"/><rect x="3" y="1" width="8" height="4.5" fill="#cfcfcf" stroke="#888" stroke-width="0.6"/></g></svg>
<svg style="left:741.4px;top:280px" width="8.10" height="8.00" viewBox="0 0 14 14" preserveAspectRatio="none"><rect x="0.5" y="0.5" width="13" height="13" fill="#f0f0f0" stroke="#6a6a6a" stroke-width="0.8"/><rect x="1.5" y="1.5" width="5.5" height="5.5" fill="#3a6fc0"/><path d="M7 7 L13.5 13.5" stroke="#444" stroke-width="1"/></svg>
<svg style="left:752.8px;top:282.7px" width="4.4" height="2.8" viewBox="0 0 4.4 2.8"><path d="M0.2 0.3 H4.2 L2.2 2.6Z" fill="#333"/></svg>
<div class="t" style="left:762px;top:281.47px;font-size:7px;color:#333;font-weight:400;transform:scaleX(1.152);transform-origin:0 0;">»</div>
<div class="r" style="left:652.8px;top:281px;width:0.6px;height:7px;background:#d6d6d6"></div>
<div class="r" style="left:694.8px;top:281px;width:0.6px;height:7px;background:#d6d6d6"></div>
<div class="r" style="left:710.5px;top:281px;width:0.6px;height:7px;background:#d6d6d6"></div>
<div class="r" style="left:738.8px;top:281px;width:0.6px;height:7px;background:#d6d6d6"></div>
</body></html>
